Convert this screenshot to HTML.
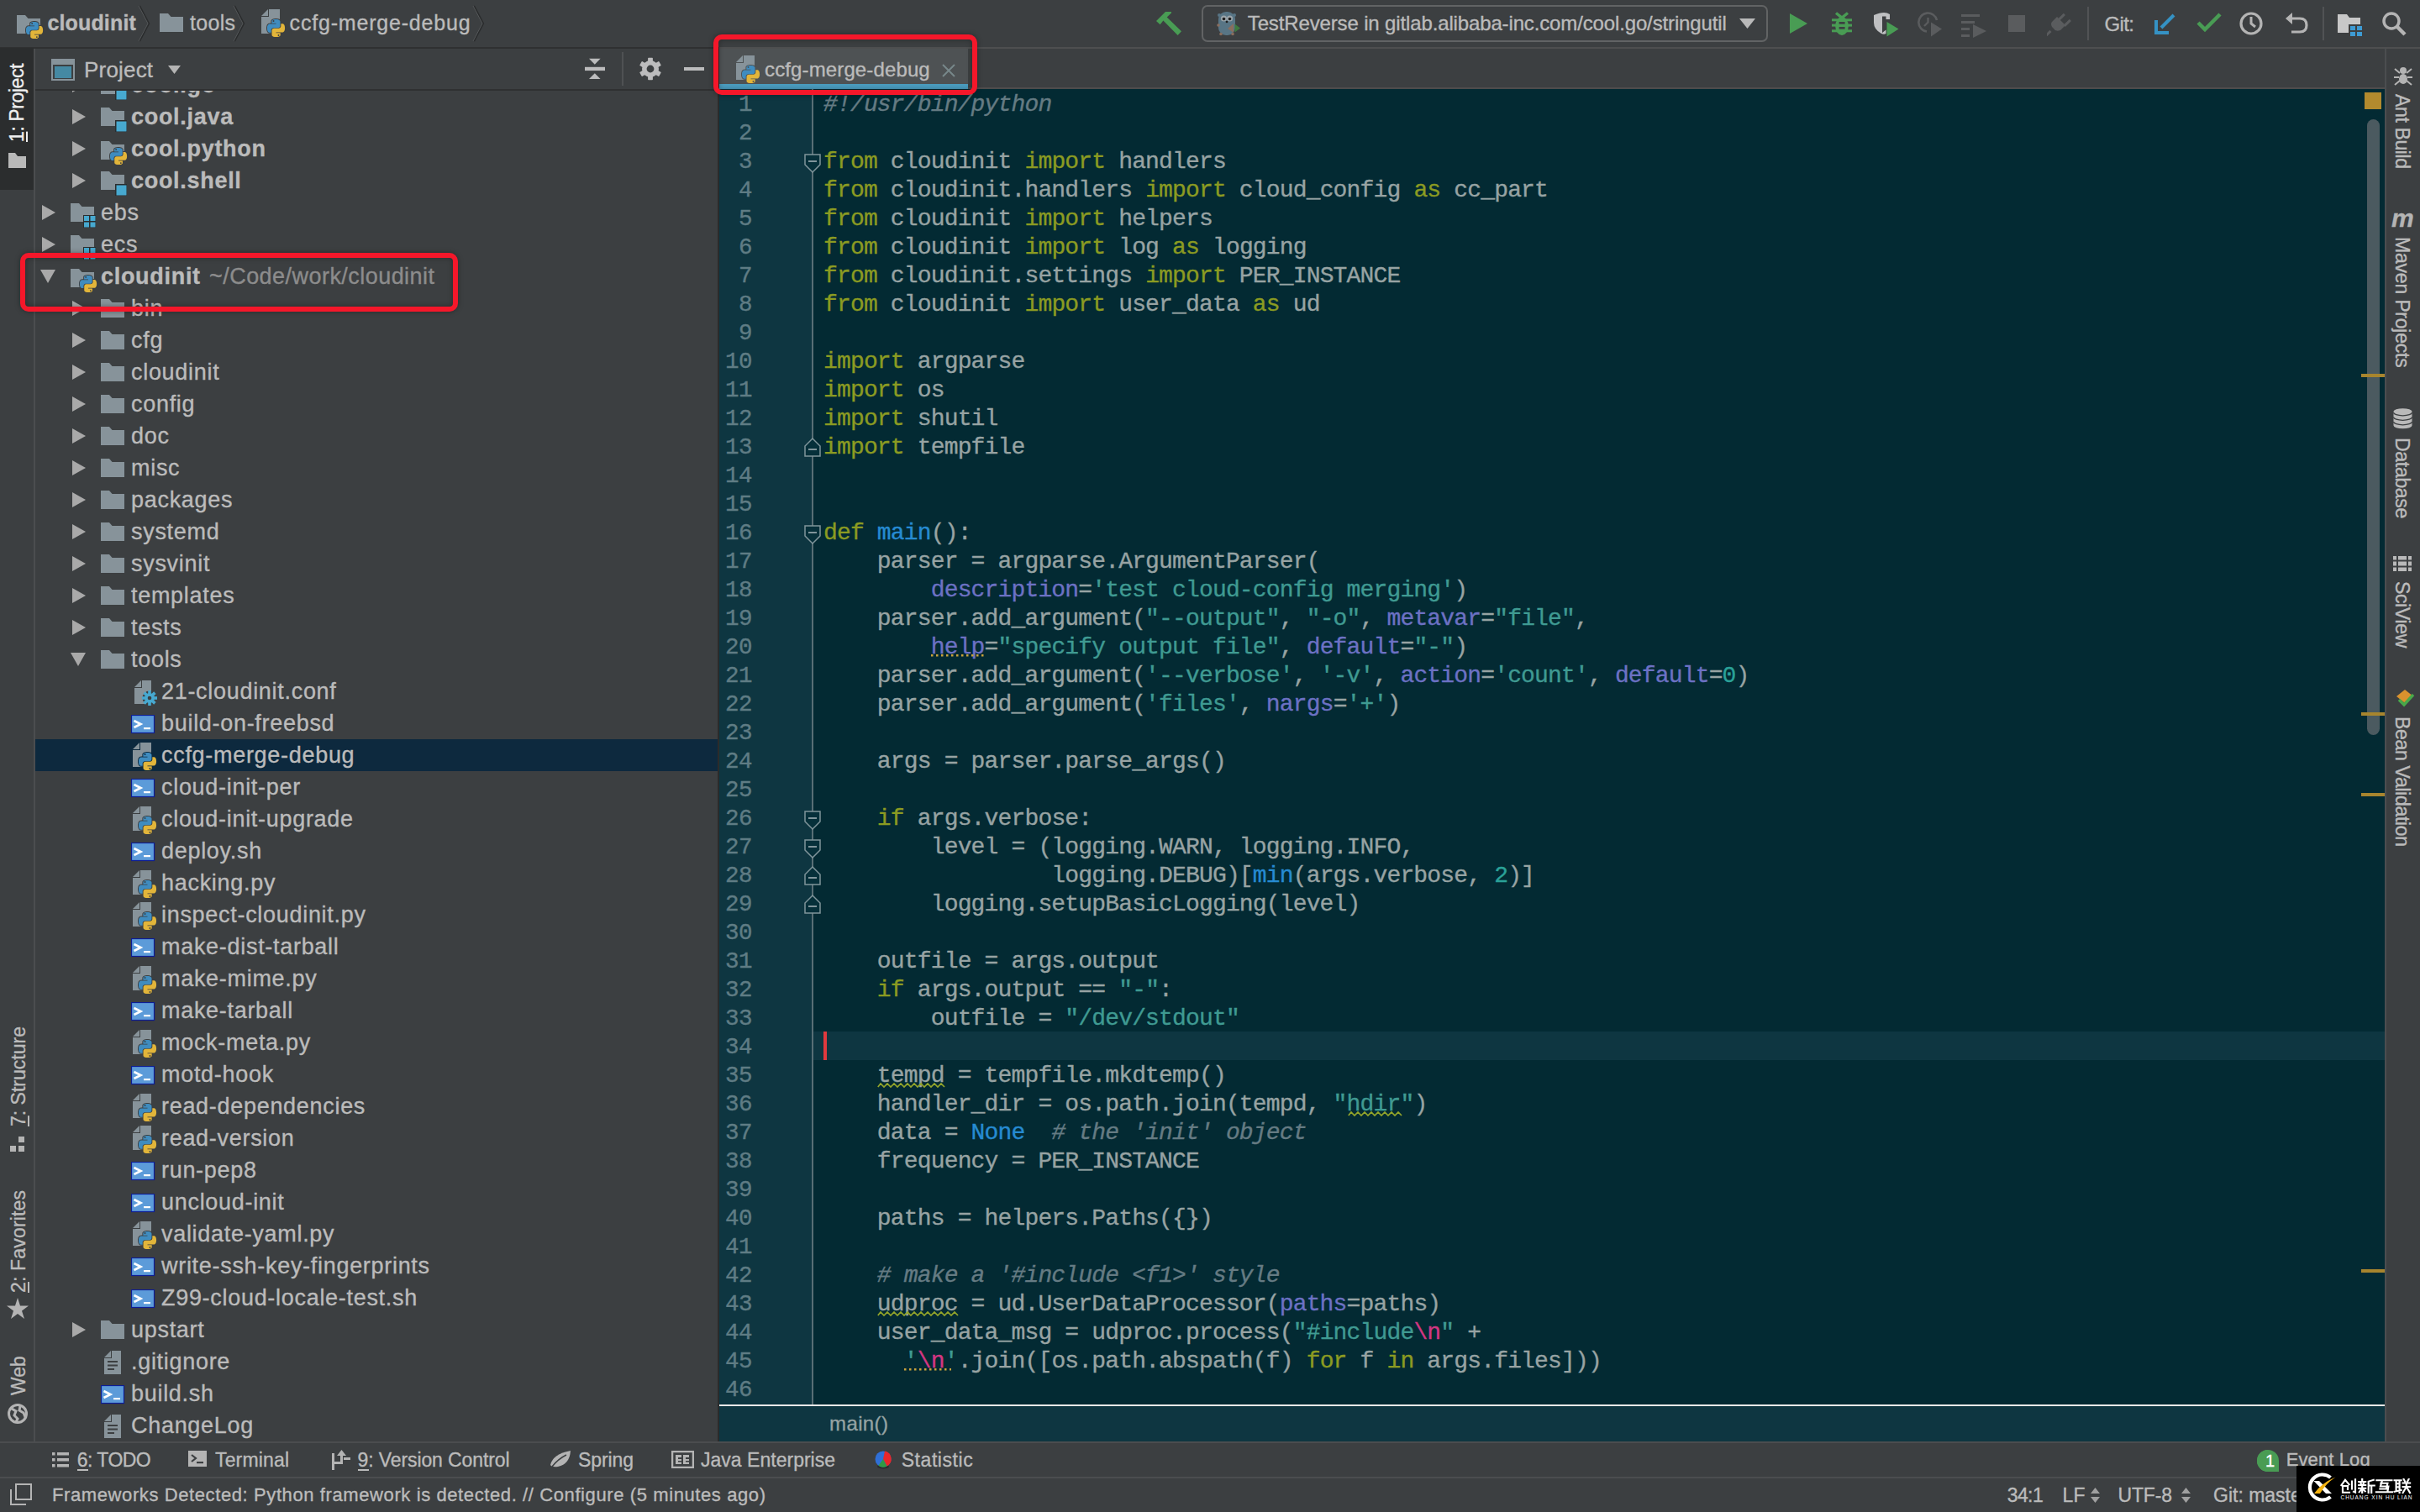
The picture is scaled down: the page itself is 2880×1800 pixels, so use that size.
<!DOCTYPE html><html><head><meta charset="utf-8"><style>
html,body{margin:0;padding:0;width:2880px;height:1800px;overflow:hidden;background:#3c3f41;}
body>div,body>svg{position:absolute;}
.t{white-space:pre;line-height:1;font-family:"Liberation Sans",sans-serif;-webkit-text-stroke:0.35px currentColor;}
</style></head><body>
<div style="left:0px;top:0px;width:2880px;height:56px;background:#3c3f41;"></div>
<div style="left:0px;top:56px;width:856px;height:2px;background:#2f3031;"></div>
<div style="left:856px;top:56px;width:2024px;height:2px;background:#4e4f50;"></div>
<div style="left:0px;top:58px;width:40px;height:1658px;background:#3c3f41;"></div>
<div style="left:0px;top:57px;width:40px;height:169px;background:#2b2d2e;"></div>
<div style="left:40px;top:58px;width:2px;height:1658px;background:#4b4d4f;"></div>
<div style="left:42px;top:58px;width:812px;height:1658px;background:#3c3f41;"></div>
<div style="left:42px;top:106px;width:812px;height:2px;background:#2f3031;"></div>
<div style="left:854px;top:58px;width:2px;height:1658px;background:#2b2b2b;"></div>
<div style="left:856px;top:58px;width:1982px;height:48px;background:#3c3f41;"></div>
<div style="left:856px;top:104px;width:1982px;height:2px;background:#4e4c4c;"></div>
<div style="left:2838px;top:58px;width:2px;height:1658px;background:#4b4d4f;"></div>
<div style="left:2840px;top:58px;width:40px;height:1658px;background:#3c3f41;"></div>
<div style="left:856px;top:106px;width:110px;height:1566px;background:#0e3641;"></div>
<div style="left:966px;top:106px;width:2px;height:1566px;background:#586e75;"></div>
<div style="left:968px;top:106px;width:1870px;height:1566px;background:#032a33;"></div>
<div style="left:968px;top:1228px;width:1870px;height:34px;background:#0e3641;"></div>
<div style="left:980px;top:1228px;width:4px;height:34px;background:#e0393e;"></div>
<div style="left:856px;top:1672px;width:1982px;height:2px;background:#e8e8e8;"></div>
<div style="left:856px;top:1674px;width:1982px;height:42px;background:#0e3641;"></div>
<div style="left:0px;top:1716px;width:2880px;height:2px;background:#4b4d4f;"></div>
<div style="left:0px;top:1718px;width:2880px;height:40px;background:#3c3f41;"></div>
<div style="left:0px;top:1758px;width:2880px;height:2px;background:#4b4d4f;"></div>
<div style="left:0px;top:1760px;width:2880px;height:40px;background:#3c3f41;"></div>
<div class="t" style="left:879.0px;top:110.93px;font-size:27.5px;color:#5f7c84;font-weight:normal;font-style:normal;font-family:'Liberation Mono', monospace;letter-spacing:-0.5px">1</div>
<div class="t" style="left:980px;top:110.55px;font-size:28px;color:#97a3a3;font-weight:normal;font-style:normal;font-family:'Liberation Mono', monospace;letter-spacing:-0.840px"><span style="color:#657b83;font-style:italic">#!/usr/bin/python</span></div>
<div class="t" style="left:879.0px;top:144.93px;font-size:27.5px;color:#5f7c84;font-weight:normal;font-style:normal;font-family:'Liberation Mono', monospace;letter-spacing:-0.5px">2</div>
<div class="t" style="left:879.0px;top:178.93px;font-size:27.5px;color:#5f7c84;font-weight:normal;font-style:normal;font-family:'Liberation Mono', monospace;letter-spacing:-0.5px">3</div>
<div class="t" style="left:980px;top:178.55px;font-size:28px;color:#97a3a3;font-weight:normal;font-style:normal;font-family:'Liberation Mono', monospace;letter-spacing:-0.840px"><span style="color:#8b9b22">from</span><span style="color:#97a3a3"> cloudinit </span><span style="color:#8b9b22">import</span><span style="color:#97a3a3"> handlers</span></div>
<div class="t" style="left:879.0px;top:212.93px;font-size:27.5px;color:#5f7c84;font-weight:normal;font-style:normal;font-family:'Liberation Mono', monospace;letter-spacing:-0.5px">4</div>
<div class="t" style="left:980px;top:212.55px;font-size:28px;color:#97a3a3;font-weight:normal;font-style:normal;font-family:'Liberation Mono', monospace;letter-spacing:-0.840px"><span style="color:#8b9b22">from</span><span style="color:#97a3a3"> cloudinit.handlers </span><span style="color:#8b9b22">import</span><span style="color:#97a3a3"> cloud_config </span><span style="color:#8b9b22">as</span><span style="color:#97a3a3"> cc_part</span></div>
<div class="t" style="left:879.0px;top:246.93px;font-size:27.5px;color:#5f7c84;font-weight:normal;font-style:normal;font-family:'Liberation Mono', monospace;letter-spacing:-0.5px">5</div>
<div class="t" style="left:980px;top:246.55px;font-size:28px;color:#97a3a3;font-weight:normal;font-style:normal;font-family:'Liberation Mono', monospace;letter-spacing:-0.840px"><span style="color:#8b9b22">from</span><span style="color:#97a3a3"> cloudinit </span><span style="color:#8b9b22">import</span><span style="color:#97a3a3"> helpers</span></div>
<div class="t" style="left:879.0px;top:280.93px;font-size:27.5px;color:#5f7c84;font-weight:normal;font-style:normal;font-family:'Liberation Mono', monospace;letter-spacing:-0.5px">6</div>
<div class="t" style="left:980px;top:280.55px;font-size:28px;color:#97a3a3;font-weight:normal;font-style:normal;font-family:'Liberation Mono', monospace;letter-spacing:-0.840px"><span style="color:#8b9b22">from</span><span style="color:#97a3a3"> cloudinit </span><span style="color:#8b9b22">import</span><span style="color:#97a3a3"> log </span><span style="color:#8b9b22">as</span><span style="color:#97a3a3"> logging</span></div>
<div class="t" style="left:879.0px;top:314.93px;font-size:27.5px;color:#5f7c84;font-weight:normal;font-style:normal;font-family:'Liberation Mono', monospace;letter-spacing:-0.5px">7</div>
<div class="t" style="left:980px;top:314.55px;font-size:28px;color:#97a3a3;font-weight:normal;font-style:normal;font-family:'Liberation Mono', monospace;letter-spacing:-0.840px"><span style="color:#8b9b22">from</span><span style="color:#97a3a3"> cloudinit.settings </span><span style="color:#8b9b22">import</span><span style="color:#97a3a3"> PER_INSTANCE</span></div>
<div class="t" style="left:879.0px;top:348.93px;font-size:27.5px;color:#5f7c84;font-weight:normal;font-style:normal;font-family:'Liberation Mono', monospace;letter-spacing:-0.5px">8</div>
<div class="t" style="left:980px;top:348.55px;font-size:28px;color:#97a3a3;font-weight:normal;font-style:normal;font-family:'Liberation Mono', monospace;letter-spacing:-0.840px"><span style="color:#8b9b22">from</span><span style="color:#97a3a3"> cloudinit </span><span style="color:#8b9b22">import</span><span style="color:#97a3a3"> user_data </span><span style="color:#8b9b22">as</span><span style="color:#97a3a3"> ud</span></div>
<div class="t" style="left:879.0px;top:382.93px;font-size:27.5px;color:#5f7c84;font-weight:normal;font-style:normal;font-family:'Liberation Mono', monospace;letter-spacing:-0.5px">9</div>
<div class="t" style="left:863.0px;top:416.93px;font-size:27.5px;color:#5f7c84;font-weight:normal;font-style:normal;font-family:'Liberation Mono', monospace;letter-spacing:-0.5px">10</div>
<div class="t" style="left:980px;top:416.55px;font-size:28px;color:#97a3a3;font-weight:normal;font-style:normal;font-family:'Liberation Mono', monospace;letter-spacing:-0.840px"><span style="color:#8b9b22">import</span><span style="color:#97a3a3"> argparse</span></div>
<div class="t" style="left:863.0px;top:450.93px;font-size:27.5px;color:#5f7c84;font-weight:normal;font-style:normal;font-family:'Liberation Mono', monospace;letter-spacing:-0.5px">11</div>
<div class="t" style="left:980px;top:450.55px;font-size:28px;color:#97a3a3;font-weight:normal;font-style:normal;font-family:'Liberation Mono', monospace;letter-spacing:-0.840px"><span style="color:#8b9b22">import</span><span style="color:#97a3a3"> os</span></div>
<div class="t" style="left:863.0px;top:484.93px;font-size:27.5px;color:#5f7c84;font-weight:normal;font-style:normal;font-family:'Liberation Mono', monospace;letter-spacing:-0.5px">12</div>
<div class="t" style="left:980px;top:484.55px;font-size:28px;color:#97a3a3;font-weight:normal;font-style:normal;font-family:'Liberation Mono', monospace;letter-spacing:-0.840px"><span style="color:#8b9b22">import</span><span style="color:#97a3a3"> shutil</span></div>
<div class="t" style="left:863.0px;top:518.93px;font-size:27.5px;color:#5f7c84;font-weight:normal;font-style:normal;font-family:'Liberation Mono', monospace;letter-spacing:-0.5px">13</div>
<div class="t" style="left:980px;top:518.55px;font-size:28px;color:#97a3a3;font-weight:normal;font-style:normal;font-family:'Liberation Mono', monospace;letter-spacing:-0.840px"><span style="color:#8b9b22">import</span><span style="color:#97a3a3"> tempfile</span></div>
<div class="t" style="left:863.0px;top:552.93px;font-size:27.5px;color:#5f7c84;font-weight:normal;font-style:normal;font-family:'Liberation Mono', monospace;letter-spacing:-0.5px">14</div>
<div class="t" style="left:863.0px;top:586.93px;font-size:27.5px;color:#5f7c84;font-weight:normal;font-style:normal;font-family:'Liberation Mono', monospace;letter-spacing:-0.5px">15</div>
<div class="t" style="left:863.0px;top:620.93px;font-size:27.5px;color:#5f7c84;font-weight:normal;font-style:normal;font-family:'Liberation Mono', monospace;letter-spacing:-0.5px">16</div>
<div class="t" style="left:980px;top:620.55px;font-size:28px;color:#97a3a3;font-weight:normal;font-style:normal;font-family:'Liberation Mono', monospace;letter-spacing:-0.840px"><span style="color:#8b9b22">def</span><span style="color:#97a3a3"> </span><span style="color:#268bd2">main</span><span style="color:#97a3a3">():</span></div>
<div class="t" style="left:863.0px;top:654.93px;font-size:27.5px;color:#5f7c84;font-weight:normal;font-style:normal;font-family:'Liberation Mono', monospace;letter-spacing:-0.5px">17</div>
<div class="t" style="left:980px;top:654.55px;font-size:28px;color:#97a3a3;font-weight:normal;font-style:normal;font-family:'Liberation Mono', monospace;letter-spacing:-0.840px"><span style="color:#97a3a3">    parser = argparse.ArgumentParser(</span></div>
<div class="t" style="left:863.0px;top:688.93px;font-size:27.5px;color:#5f7c84;font-weight:normal;font-style:normal;font-family:'Liberation Mono', monospace;letter-spacing:-0.5px">18</div>
<div class="t" style="left:980px;top:688.55px;font-size:28px;color:#97a3a3;font-weight:normal;font-style:normal;font-family:'Liberation Mono', monospace;letter-spacing:-0.840px"><span style="color:#97a3a3">        </span><span style="color:#6c71c4">description</span><span style="color:#97a3a3">=</span><span style="color:#3f9a92">'test cloud-config merging'</span><span style="color:#97a3a3">)</span></div>
<div class="t" style="left:863.0px;top:722.93px;font-size:27.5px;color:#5f7c84;font-weight:normal;font-style:normal;font-family:'Liberation Mono', monospace;letter-spacing:-0.5px">19</div>
<div class="t" style="left:980px;top:722.55px;font-size:28px;color:#97a3a3;font-weight:normal;font-style:normal;font-family:'Liberation Mono', monospace;letter-spacing:-0.840px"><span style="color:#97a3a3">    parser.add_argument(</span><span style="color:#3f9a92">"--output"</span><span style="color:#97a3a3">, </span><span style="color:#3f9a92">"-o"</span><span style="color:#97a3a3">, </span><span style="color:#6c71c4">metavar</span><span style="color:#97a3a3">=</span><span style="color:#3f9a92">"file"</span><span style="color:#97a3a3">,</span></div>
<div class="t" style="left:863.0px;top:756.93px;font-size:27.5px;color:#5f7c84;font-weight:normal;font-style:normal;font-family:'Liberation Mono', monospace;letter-spacing:-0.5px">20</div>
<div class="t" style="left:980px;top:756.55px;font-size:28px;color:#97a3a3;font-weight:normal;font-style:normal;font-family:'Liberation Mono', monospace;letter-spacing:-0.840px"><span style="color:#97a3a3">        </span><span style="color:#6c71c4">help</span><span style="color:#97a3a3">=</span><span style="color:#3f9a92">"specify output file"</span><span style="color:#97a3a3">, </span><span style="color:#6c71c4">default</span><span style="color:#97a3a3">=</span><span style="color:#3f9a92">"-"</span><span style="color:#97a3a3">)</span></div>
<div class="t" style="left:863.0px;top:790.93px;font-size:27.5px;color:#5f7c84;font-weight:normal;font-style:normal;font-family:'Liberation Mono', monospace;letter-spacing:-0.5px">21</div>
<div class="t" style="left:980px;top:790.55px;font-size:28px;color:#97a3a3;font-weight:normal;font-style:normal;font-family:'Liberation Mono', monospace;letter-spacing:-0.840px"><span style="color:#97a3a3">    parser.add_argument(</span><span style="color:#3f9a92">'--verbose'</span><span style="color:#97a3a3">, </span><span style="color:#3f9a92">'-v'</span><span style="color:#97a3a3">, </span><span style="color:#6c71c4">action</span><span style="color:#97a3a3">=</span><span style="color:#3f9a92">'count'</span><span style="color:#97a3a3">, </span><span style="color:#6c71c4">default</span><span style="color:#97a3a3">=</span><span style="color:#2aa198">0</span><span style="color:#97a3a3">)</span></div>
<div class="t" style="left:863.0px;top:824.93px;font-size:27.5px;color:#5f7c84;font-weight:normal;font-style:normal;font-family:'Liberation Mono', monospace;letter-spacing:-0.5px">22</div>
<div class="t" style="left:980px;top:824.55px;font-size:28px;color:#97a3a3;font-weight:normal;font-style:normal;font-family:'Liberation Mono', monospace;letter-spacing:-0.840px"><span style="color:#97a3a3">    parser.add_argument(</span><span style="color:#3f9a92">'files'</span><span style="color:#97a3a3">, </span><span style="color:#6c71c4">nargs</span><span style="color:#97a3a3">=</span><span style="color:#3f9a92">'+'</span><span style="color:#97a3a3">)</span></div>
<div class="t" style="left:863.0px;top:858.93px;font-size:27.5px;color:#5f7c84;font-weight:normal;font-style:normal;font-family:'Liberation Mono', monospace;letter-spacing:-0.5px">23</div>
<div class="t" style="left:863.0px;top:892.93px;font-size:27.5px;color:#5f7c84;font-weight:normal;font-style:normal;font-family:'Liberation Mono', monospace;letter-spacing:-0.5px">24</div>
<div class="t" style="left:980px;top:892.55px;font-size:28px;color:#97a3a3;font-weight:normal;font-style:normal;font-family:'Liberation Mono', monospace;letter-spacing:-0.840px"><span style="color:#97a3a3">    args = parser.parse_args()</span></div>
<div class="t" style="left:863.0px;top:926.93px;font-size:27.5px;color:#5f7c84;font-weight:normal;font-style:normal;font-family:'Liberation Mono', monospace;letter-spacing:-0.5px">25</div>
<div class="t" style="left:863.0px;top:960.93px;font-size:27.5px;color:#5f7c84;font-weight:normal;font-style:normal;font-family:'Liberation Mono', monospace;letter-spacing:-0.5px">26</div>
<div class="t" style="left:980px;top:960.55px;font-size:28px;color:#97a3a3;font-weight:normal;font-style:normal;font-family:'Liberation Mono', monospace;letter-spacing:-0.840px"><span style="color:#97a3a3">    </span><span style="color:#8b9b22">if</span><span style="color:#97a3a3"> args.verbose:</span></div>
<div class="t" style="left:863.0px;top:994.93px;font-size:27.5px;color:#5f7c84;font-weight:normal;font-style:normal;font-family:'Liberation Mono', monospace;letter-spacing:-0.5px">27</div>
<div class="t" style="left:980px;top:994.55px;font-size:28px;color:#97a3a3;font-weight:normal;font-style:normal;font-family:'Liberation Mono', monospace;letter-spacing:-0.840px"><span style="color:#97a3a3">        level = (logging.WARN, logging.INFO,</span></div>
<div class="t" style="left:863.0px;top:1028.93px;font-size:27.5px;color:#5f7c84;font-weight:normal;font-style:normal;font-family:'Liberation Mono', monospace;letter-spacing:-0.5px">28</div>
<div class="t" style="left:980px;top:1028.55px;font-size:28px;color:#97a3a3;font-weight:normal;font-style:normal;font-family:'Liberation Mono', monospace;letter-spacing:-0.840px"><span style="color:#97a3a3">                 logging.DEBUG)[</span><span style="color:#268bd2">min</span><span style="color:#97a3a3">(args.verbose, </span><span style="color:#2aa198">2</span><span style="color:#97a3a3">)]</span></div>
<div class="t" style="left:863.0px;top:1062.93px;font-size:27.5px;color:#5f7c84;font-weight:normal;font-style:normal;font-family:'Liberation Mono', monospace;letter-spacing:-0.5px">29</div>
<div class="t" style="left:980px;top:1062.55px;font-size:28px;color:#97a3a3;font-weight:normal;font-style:normal;font-family:'Liberation Mono', monospace;letter-spacing:-0.840px"><span style="color:#97a3a3">        logging.setupBasicLogging(level)</span></div>
<div class="t" style="left:863.0px;top:1096.93px;font-size:27.5px;color:#5f7c84;font-weight:normal;font-style:normal;font-family:'Liberation Mono', monospace;letter-spacing:-0.5px">30</div>
<div class="t" style="left:863.0px;top:1130.93px;font-size:27.5px;color:#5f7c84;font-weight:normal;font-style:normal;font-family:'Liberation Mono', monospace;letter-spacing:-0.5px">31</div>
<div class="t" style="left:980px;top:1130.55px;font-size:28px;color:#97a3a3;font-weight:normal;font-style:normal;font-family:'Liberation Mono', monospace;letter-spacing:-0.840px"><span style="color:#97a3a3">    outfile = args.output</span></div>
<div class="t" style="left:863.0px;top:1164.93px;font-size:27.5px;color:#5f7c84;font-weight:normal;font-style:normal;font-family:'Liberation Mono', monospace;letter-spacing:-0.5px">32</div>
<div class="t" style="left:980px;top:1164.55px;font-size:28px;color:#97a3a3;font-weight:normal;font-style:normal;font-family:'Liberation Mono', monospace;letter-spacing:-0.840px"><span style="color:#97a3a3">    </span><span style="color:#8b9b22">if</span><span style="color:#97a3a3"> args.output == </span><span style="color:#3f9a92">"-"</span><span style="color:#97a3a3">:</span></div>
<div class="t" style="left:863.0px;top:1198.93px;font-size:27.5px;color:#5f7c84;font-weight:normal;font-style:normal;font-family:'Liberation Mono', monospace;letter-spacing:-0.5px">33</div>
<div class="t" style="left:980px;top:1198.55px;font-size:28px;color:#97a3a3;font-weight:normal;font-style:normal;font-family:'Liberation Mono', monospace;letter-spacing:-0.840px"><span style="color:#97a3a3">        outfile = </span><span style="color:#3f9a92">"/dev/stdout"</span></div>
<div class="t" style="left:863.0px;top:1232.93px;font-size:27.5px;color:#5f7c84;font-weight:normal;font-style:normal;font-family:'Liberation Mono', monospace;letter-spacing:-0.5px">34</div>
<div class="t" style="left:863.0px;top:1266.93px;font-size:27.5px;color:#5f7c84;font-weight:normal;font-style:normal;font-family:'Liberation Mono', monospace;letter-spacing:-0.5px">35</div>
<div class="t" style="left:980px;top:1266.55px;font-size:28px;color:#97a3a3;font-weight:normal;font-style:normal;font-family:'Liberation Mono', monospace;letter-spacing:-0.840px"><span style="color:#97a3a3">    tempd = tempfile.mkdtemp()</span></div>
<div class="t" style="left:863.0px;top:1300.93px;font-size:27.5px;color:#5f7c84;font-weight:normal;font-style:normal;font-family:'Liberation Mono', monospace;letter-spacing:-0.5px">36</div>
<div class="t" style="left:980px;top:1300.55px;font-size:28px;color:#97a3a3;font-weight:normal;font-style:normal;font-family:'Liberation Mono', monospace;letter-spacing:-0.840px"><span style="color:#97a3a3">    handler_dir = os.path.join(tempd, </span><span style="color:#3f9a92">"hdir"</span><span style="color:#97a3a3">)</span></div>
<div class="t" style="left:863.0px;top:1334.93px;font-size:27.5px;color:#5f7c84;font-weight:normal;font-style:normal;font-family:'Liberation Mono', monospace;letter-spacing:-0.5px">37</div>
<div class="t" style="left:980px;top:1334.55px;font-size:28px;color:#97a3a3;font-weight:normal;font-style:normal;font-family:'Liberation Mono', monospace;letter-spacing:-0.840px"><span style="color:#97a3a3">    data = </span><span style="color:#268bd2">None</span><span style="color:#97a3a3">  </span><span style="color:#657b83;font-style:italic"># the 'init' object</span></div>
<div class="t" style="left:863.0px;top:1368.93px;font-size:27.5px;color:#5f7c84;font-weight:normal;font-style:normal;font-family:'Liberation Mono', monospace;letter-spacing:-0.5px">38</div>
<div class="t" style="left:980px;top:1368.55px;font-size:28px;color:#97a3a3;font-weight:normal;font-style:normal;font-family:'Liberation Mono', monospace;letter-spacing:-0.840px"><span style="color:#97a3a3">    frequency = PER_INSTANCE</span></div>
<div class="t" style="left:863.0px;top:1402.93px;font-size:27.5px;color:#5f7c84;font-weight:normal;font-style:normal;font-family:'Liberation Mono', monospace;letter-spacing:-0.5px">39</div>
<div class="t" style="left:863.0px;top:1436.93px;font-size:27.5px;color:#5f7c84;font-weight:normal;font-style:normal;font-family:'Liberation Mono', monospace;letter-spacing:-0.5px">40</div>
<div class="t" style="left:980px;top:1436.55px;font-size:28px;color:#97a3a3;font-weight:normal;font-style:normal;font-family:'Liberation Mono', monospace;letter-spacing:-0.840px"><span style="color:#97a3a3">    paths = helpers.Paths({})</span></div>
<div class="t" style="left:863.0px;top:1470.93px;font-size:27.5px;color:#5f7c84;font-weight:normal;font-style:normal;font-family:'Liberation Mono', monospace;letter-spacing:-0.5px">41</div>
<div class="t" style="left:863.0px;top:1504.93px;font-size:27.5px;color:#5f7c84;font-weight:normal;font-style:normal;font-family:'Liberation Mono', monospace;letter-spacing:-0.5px">42</div>
<div class="t" style="left:980px;top:1504.55px;font-size:28px;color:#97a3a3;font-weight:normal;font-style:normal;font-family:'Liberation Mono', monospace;letter-spacing:-0.840px"><span style="color:#97a3a3">    </span><span style="color:#657b83;font-style:italic"># make a '#include &lt;f1&gt;' style</span></div>
<div class="t" style="left:863.0px;top:1538.93px;font-size:27.5px;color:#5f7c84;font-weight:normal;font-style:normal;font-family:'Liberation Mono', monospace;letter-spacing:-0.5px">43</div>
<div class="t" style="left:980px;top:1538.55px;font-size:28px;color:#97a3a3;font-weight:normal;font-style:normal;font-family:'Liberation Mono', monospace;letter-spacing:-0.840px"><span style="color:#97a3a3">    udproc = ud.UserDataProcessor(</span><span style="color:#6c71c4">paths</span><span style="color:#97a3a3">=paths)</span></div>
<div class="t" style="left:863.0px;top:1572.93px;font-size:27.5px;color:#5f7c84;font-weight:normal;font-style:normal;font-family:'Liberation Mono', monospace;letter-spacing:-0.5px">44</div>
<div class="t" style="left:980px;top:1572.55px;font-size:28px;color:#97a3a3;font-weight:normal;font-style:normal;font-family:'Liberation Mono', monospace;letter-spacing:-0.840px"><span style="color:#97a3a3">    user_data_msg = udproc.process(</span><span style="color:#3f9a92">"#include</span><span style="color:#d33682">\n</span><span style="color:#3f9a92">"</span><span style="color:#97a3a3"> +</span></div>
<div class="t" style="left:863.0px;top:1606.93px;font-size:27.5px;color:#5f7c84;font-weight:normal;font-style:normal;font-family:'Liberation Mono', monospace;letter-spacing:-0.5px">45</div>
<div class="t" style="left:980px;top:1606.55px;font-size:28px;color:#97a3a3;font-weight:normal;font-style:normal;font-family:'Liberation Mono', monospace;letter-spacing:-0.840px"><span style="color:#97a3a3">      </span><span style="color:#3f9a92">'</span><span style="color:#d33682">\n</span><span style="color:#3f9a92">'</span><span style="color:#97a3a3">.join([os.path.abspath(f) </span><span style="color:#8b9b22">for</span><span style="color:#97a3a3"> f </span><span style="color:#8b9b22">in</span><span style="color:#97a3a3"> args.files]))</span></div>
<div class="t" style="left:863.0px;top:1640.93px;font-size:27.5px;color:#5f7c84;font-weight:normal;font-style:normal;font-family:'Liberation Mono', monospace;letter-spacing:-0.5px">46</div>
<div style="left:42px;top:108px;width:812px;height:1608px;overflow:hidden">
<svg style="position:absolute;left:44px;top:-16px" width="17" height="19" viewBox="0 0 17 19"><path d="M0 0 L16 9 L0 18 Z" fill="#a9a9a9"/></svg>
<svg style="position:absolute;left:78px;top:-18px" width="29" height="23" viewBox="0 0 29 23"><path d="M0 0 H10 L13.5 4 H28 V22 H0 Z" fill="#87939a"/></svg>
<svg style="position:absolute;left:95px;top:-3px" width="14" height="14" viewBox="0 0 14 14"><rect x="0" y="0" width="14" height="14" fill="#2b2d2e"/><rect x="1.5" y="1.5" width="12" height="12" fill="#47a9d0"/></svg>
<div class="t" style="position:absolute;left:114px;top:-19.86px;font-size:27px;color:#bbbbbb;font-weight:bold;font-style:normal;font-family:'Liberation Sans', sans-serif;letter-spacing:0.7px">cool.go</div>
<svg style="position:absolute;left:44px;top:22px" width="17" height="19" viewBox="0 0 17 19"><path d="M0 0 L16 9 L0 18 Z" fill="#a9a9a9"/></svg>
<svg style="position:absolute;left:78px;top:20px" width="29" height="23" viewBox="0 0 29 23"><path d="M0 0 H10 L13.5 4 H28 V22 H0 Z" fill="#87939a"/></svg>
<svg style="position:absolute;left:95px;top:35px" width="14" height="14" viewBox="0 0 14 14"><rect x="0" y="0" width="14" height="14" fill="#2b2d2e"/><rect x="1.5" y="1.5" width="12" height="12" fill="#47a9d0"/></svg>
<div class="t" style="position:absolute;left:114px;top:18.14px;font-size:27px;color:#bbbbbb;font-weight:bold;font-style:normal;font-family:'Liberation Sans', sans-serif;letter-spacing:0.7px">cool.java</div>
<svg style="position:absolute;left:44px;top:60px" width="17" height="19" viewBox="0 0 17 19"><path d="M0 0 L16 9 L0 18 Z" fill="#a9a9a9"/></svg>
<svg style="position:absolute;left:78px;top:60px" width="29" height="23" viewBox="0 0 29 23"><path d="M0 0 H10 L13.5 4 H28 V22 H0 Z" fill="#87939a"/></svg>
<svg style="position:absolute;left:88px;top:67px" width="22" height="22" viewBox="0 0 22 22"><g transform="translate(0.88 0.88) scale(0.2024)"><path d="M49.5 0 C24 0 25.6 11 25.6 11 L25.6 22.5 L50 22.5 L50 26 L16 26 C16 26 0 24 0 50 C0 76 14 75 14 75 L22.5 75 L22.5 63 C22.5 63 21.8 49 36 49 L60 49 C60 49 73.5 49.2 73.5 36 L73.5 13.5 C73.5 13.5 75.5 0 49.5 0 Z" fill="#3c3f41" stroke="#3c3f41" stroke-width="9" stroke-linejoin="round"/><path d="M49.5 0 C24 0 25.6 11 25.6 11 L25.6 22.5 L50 22.5 L50 26 L16 26 C16 26 0 24 0 50 C0 76 14 75 14 75 L22.5 75 L22.5 63 C22.5 63 21.8 49 36 49 L60 49 C60 49 73.5 49.2 73.5 36 L73.5 13.5 C73.5 13.5 75.5 0 49.5 0 Z" transform="rotate(180 50 50)" fill="#3c3f41" stroke="#3c3f41" stroke-width="9" stroke-linejoin="round"/><path d="M49.5 0 C24 0 25.6 11 25.6 11 L25.6 22.5 L50 22.5 L50 26 L16 26 C16 26 0 24 0 50 C0 76 14 75 14 75 L22.5 75 L22.5 63 C22.5 63 21.8 49 36 49 L60 49 C60 49 73.5 49.2 73.5 36 L73.5 13.5 C73.5 13.5 75.5 0 49.5 0 Z" fill="#3f8cbf"/><path d="M49.5 0 C24 0 25.6 11 25.6 11 L25.6 22.5 L50 22.5 L50 26 L16 26 C16 26 0 24 0 50 C0 76 14 75 14 75 L22.5 75 L22.5 63 C22.5 63 21.8 49 36 49 L60 49 C60 49 73.5 49.2 73.5 36 L73.5 13.5 C73.5 13.5 75.5 0 49.5 0 Z" transform="rotate(180 50 50)" fill="#e2b53a"/><circle cx="36" cy="10" r="4.5" fill="#3c3f41"/><circle cx="64" cy="90" r="4.5" fill="#3c3f41"/></g></svg>
<div class="t" style="position:absolute;left:114px;top:56.14px;font-size:27px;color:#bbbbbb;font-weight:bold;font-style:normal;font-family:'Liberation Sans', sans-serif;letter-spacing:0.7px">cool.python</div>
<svg style="position:absolute;left:44px;top:98px" width="17" height="19" viewBox="0 0 17 19"><path d="M0 0 L16 9 L0 18 Z" fill="#a9a9a9"/></svg>
<svg style="position:absolute;left:78px;top:96px" width="29" height="23" viewBox="0 0 29 23"><path d="M0 0 H10 L13.5 4 H28 V22 H0 Z" fill="#87939a"/></svg>
<svg style="position:absolute;left:95px;top:111px" width="14" height="14" viewBox="0 0 14 14"><rect x="0" y="0" width="14" height="14" fill="#2b2d2e"/><rect x="1.5" y="1.5" width="12" height="12" fill="#47a9d0"/></svg>
<div class="t" style="position:absolute;left:114px;top:94.14px;font-size:27px;color:#bbbbbb;font-weight:bold;font-style:normal;font-family:'Liberation Sans', sans-serif;letter-spacing:0.7px">cool.shell</div>
<svg style="position:absolute;left:8px;top:136px" width="17" height="19" viewBox="0 0 17 19"><path d="M0 0 L16 9 L0 18 Z" fill="#a9a9a9"/></svg>
<svg style="position:absolute;left:42px;top:134px" width="29" height="23" viewBox="0 0 29 23"><path d="M0 0 H10 L13.5 4 H28 V22 H0 Z" fill="#87939a"/></svg>
<svg style="position:absolute;left:57px;top:148px" width="15" height="15" viewBox="0 0 15 15"><rect x="0" y="0" width="15" height="15" fill="#2b2d2e"/><rect x="1" y="1" width="6" height="6" fill="#47a9d0"/><rect x="8.5" y="1" width="6" height="6" fill="#47a9d0"/><rect x="1" y="8.5" width="6" height="6" fill="#47a9d0"/><rect x="8.5" y="8.5" width="6" height="6" fill="#47a9d0"/></svg>
<div class="t" style="position:absolute;left:78px;top:132.14px;font-size:27px;color:#bbbbbb;font-weight:normal;font-style:normal;font-family:'Liberation Sans', sans-serif;letter-spacing:0.7px">ebs</div>
<svg style="position:absolute;left:8px;top:174px" width="17" height="19" viewBox="0 0 17 19"><path d="M0 0 L16 9 L0 18 Z" fill="#a9a9a9"/></svg>
<svg style="position:absolute;left:42px;top:172px" width="29" height="23" viewBox="0 0 29 23"><path d="M0 0 H10 L13.5 4 H28 V22 H0 Z" fill="#87939a"/></svg>
<svg style="position:absolute;left:57px;top:186px" width="15" height="15" viewBox="0 0 15 15"><rect x="0" y="0" width="15" height="15" fill="#2b2d2e"/><rect x="1" y="1" width="6" height="6" fill="#47a9d0"/><rect x="8.5" y="1" width="6" height="6" fill="#47a9d0"/><rect x="1" y="8.5" width="6" height="6" fill="#47a9d0"/><rect x="8.5" y="8.5" width="6" height="6" fill="#47a9d0"/></svg>
<div class="t" style="position:absolute;left:78px;top:170.14px;font-size:27px;color:#bbbbbb;font-weight:normal;font-style:normal;font-family:'Liberation Sans', sans-serif;letter-spacing:0.7px">ecs</div>
<svg style="position:absolute;left:6px;top:213px" width="19" height="17" viewBox="0 0 19 17"><path d="M0 0 L18 0 L9 16 Z" fill="#a9a9a9"/></svg>
<svg style="position:absolute;left:42px;top:212px" width="29" height="23" viewBox="0 0 29 23"><path d="M0 0 H10 L13.5 4 H28 V22 H0 Z" fill="#87939a"/></svg>
<svg style="position:absolute;left:52px;top:219px" width="22" height="22" viewBox="0 0 22 22"><g transform="translate(0.88 0.88) scale(0.2024)"><path d="M49.5 0 C24 0 25.6 11 25.6 11 L25.6 22.5 L50 22.5 L50 26 L16 26 C16 26 0 24 0 50 C0 76 14 75 14 75 L22.5 75 L22.5 63 C22.5 63 21.8 49 36 49 L60 49 C60 49 73.5 49.2 73.5 36 L73.5 13.5 C73.5 13.5 75.5 0 49.5 0 Z" fill="#3c3f41" stroke="#3c3f41" stroke-width="9" stroke-linejoin="round"/><path d="M49.5 0 C24 0 25.6 11 25.6 11 L25.6 22.5 L50 22.5 L50 26 L16 26 C16 26 0 24 0 50 C0 76 14 75 14 75 L22.5 75 L22.5 63 C22.5 63 21.8 49 36 49 L60 49 C60 49 73.5 49.2 73.5 36 L73.5 13.5 C73.5 13.5 75.5 0 49.5 0 Z" transform="rotate(180 50 50)" fill="#3c3f41" stroke="#3c3f41" stroke-width="9" stroke-linejoin="round"/><path d="M49.5 0 C24 0 25.6 11 25.6 11 L25.6 22.5 L50 22.5 L50 26 L16 26 C16 26 0 24 0 50 C0 76 14 75 14 75 L22.5 75 L22.5 63 C22.5 63 21.8 49 36 49 L60 49 C60 49 73.5 49.2 73.5 36 L73.5 13.5 C73.5 13.5 75.5 0 49.5 0 Z" fill="#3f8cbf"/><path d="M49.5 0 C24 0 25.6 11 25.6 11 L25.6 22.5 L50 22.5 L50 26 L16 26 C16 26 0 24 0 50 C0 76 14 75 14 75 L22.5 75 L22.5 63 C22.5 63 21.8 49 36 49 L60 49 C60 49 73.5 49.2 73.5 36 L73.5 13.5 C73.5 13.5 75.5 0 49.5 0 Z" transform="rotate(180 50 50)" fill="#e2b53a"/><circle cx="36" cy="10" r="4.5" fill="#3c3f41"/><circle cx="64" cy="90" r="4.5" fill="#3c3f41"/></g></svg>
<div class="t" style="position:absolute;left:78px;top:208.14px;font-size:27px;color:#bbbbbb;font-weight:bold;font-style:normal;font-family:'Liberation Sans', sans-serif;letter-spacing:0.7px">cloudinit</div>
<div class="t" style="position:absolute;left:207.0px;top:208.14px;font-size:27px;color:#8c8c8c;font-weight:normal;font-style:normal;font-family:'Liberation Sans', sans-serif;letter-spacing:0.456px;">~/Code/work/cloudinit</div>
<svg style="position:absolute;left:44px;top:250px" width="17" height="19" viewBox="0 0 17 19"><path d="M0 0 L16 9 L0 18 Z" fill="#a9a9a9"/></svg>
<svg style="position:absolute;left:78px;top:248px" width="29" height="23" viewBox="0 0 29 23"><path d="M0 0 H10 L13.5 4 H28 V22 H0 Z" fill="#87939a"/></svg>
<div class="t" style="position:absolute;left:114px;top:246.14px;font-size:27px;color:#bbbbbb;font-weight:normal;font-style:normal;font-family:'Liberation Sans', sans-serif;letter-spacing:0.7px">bin</div>
<svg style="position:absolute;left:44px;top:288px" width="17" height="19" viewBox="0 0 17 19"><path d="M0 0 L16 9 L0 18 Z" fill="#a9a9a9"/></svg>
<svg style="position:absolute;left:78px;top:286px" width="29" height="23" viewBox="0 0 29 23"><path d="M0 0 H10 L13.5 4 H28 V22 H0 Z" fill="#87939a"/></svg>
<div class="t" style="position:absolute;left:114px;top:284.14px;font-size:27px;color:#bbbbbb;font-weight:normal;font-style:normal;font-family:'Liberation Sans', sans-serif;letter-spacing:0.7px">cfg</div>
<svg style="position:absolute;left:44px;top:326px" width="17" height="19" viewBox="0 0 17 19"><path d="M0 0 L16 9 L0 18 Z" fill="#a9a9a9"/></svg>
<svg style="position:absolute;left:78px;top:324px" width="29" height="23" viewBox="0 0 29 23"><path d="M0 0 H10 L13.5 4 H28 V22 H0 Z" fill="#87939a"/></svg>
<div class="t" style="position:absolute;left:114px;top:322.14px;font-size:27px;color:#bbbbbb;font-weight:normal;font-style:normal;font-family:'Liberation Sans', sans-serif;letter-spacing:0.7px">cloudinit</div>
<svg style="position:absolute;left:44px;top:364px" width="17" height="19" viewBox="0 0 17 19"><path d="M0 0 L16 9 L0 18 Z" fill="#a9a9a9"/></svg>
<svg style="position:absolute;left:78px;top:362px" width="29" height="23" viewBox="0 0 29 23"><path d="M0 0 H10 L13.5 4 H28 V22 H0 Z" fill="#87939a"/></svg>
<div class="t" style="position:absolute;left:114px;top:360.14px;font-size:27px;color:#bbbbbb;font-weight:normal;font-style:normal;font-family:'Liberation Sans', sans-serif;letter-spacing:0.7px">config</div>
<svg style="position:absolute;left:44px;top:402px" width="17" height="19" viewBox="0 0 17 19"><path d="M0 0 L16 9 L0 18 Z" fill="#a9a9a9"/></svg>
<svg style="position:absolute;left:78px;top:400px" width="29" height="23" viewBox="0 0 29 23"><path d="M0 0 H10 L13.5 4 H28 V22 H0 Z" fill="#87939a"/></svg>
<div class="t" style="position:absolute;left:114px;top:398.14px;font-size:27px;color:#bbbbbb;font-weight:normal;font-style:normal;font-family:'Liberation Sans', sans-serif;letter-spacing:0.7px">doc</div>
<svg style="position:absolute;left:44px;top:440px" width="17" height="19" viewBox="0 0 17 19"><path d="M0 0 L16 9 L0 18 Z" fill="#a9a9a9"/></svg>
<svg style="position:absolute;left:78px;top:438px" width="29" height="23" viewBox="0 0 29 23"><path d="M0 0 H10 L13.5 4 H28 V22 H0 Z" fill="#87939a"/></svg>
<div class="t" style="position:absolute;left:114px;top:436.14px;font-size:27px;color:#bbbbbb;font-weight:normal;font-style:normal;font-family:'Liberation Sans', sans-serif;letter-spacing:0.7px">misc</div>
<svg style="position:absolute;left:44px;top:478px" width="17" height="19" viewBox="0 0 17 19"><path d="M0 0 L16 9 L0 18 Z" fill="#a9a9a9"/></svg>
<svg style="position:absolute;left:78px;top:476px" width="29" height="23" viewBox="0 0 29 23"><path d="M0 0 H10 L13.5 4 H28 V22 H0 Z" fill="#87939a"/></svg>
<div class="t" style="position:absolute;left:114px;top:474.14px;font-size:27px;color:#bbbbbb;font-weight:normal;font-style:normal;font-family:'Liberation Sans', sans-serif;letter-spacing:0.7px">packages</div>
<svg style="position:absolute;left:44px;top:516px" width="17" height="19" viewBox="0 0 17 19"><path d="M0 0 L16 9 L0 18 Z" fill="#a9a9a9"/></svg>
<svg style="position:absolute;left:78px;top:514px" width="29" height="23" viewBox="0 0 29 23"><path d="M0 0 H10 L13.5 4 H28 V22 H0 Z" fill="#87939a"/></svg>
<div class="t" style="position:absolute;left:114px;top:512.14px;font-size:27px;color:#bbbbbb;font-weight:normal;font-style:normal;font-family:'Liberation Sans', sans-serif;letter-spacing:0.7px">systemd</div>
<svg style="position:absolute;left:44px;top:554px" width="17" height="19" viewBox="0 0 17 19"><path d="M0 0 L16 9 L0 18 Z" fill="#a9a9a9"/></svg>
<svg style="position:absolute;left:78px;top:552px" width="29" height="23" viewBox="0 0 29 23"><path d="M0 0 H10 L13.5 4 H28 V22 H0 Z" fill="#87939a"/></svg>
<div class="t" style="position:absolute;left:114px;top:550.14px;font-size:27px;color:#bbbbbb;font-weight:normal;font-style:normal;font-family:'Liberation Sans', sans-serif;letter-spacing:0.7px">sysvinit</div>
<svg style="position:absolute;left:44px;top:592px" width="17" height="19" viewBox="0 0 17 19"><path d="M0 0 L16 9 L0 18 Z" fill="#a9a9a9"/></svg>
<svg style="position:absolute;left:78px;top:590px" width="29" height="23" viewBox="0 0 29 23"><path d="M0 0 H10 L13.5 4 H28 V22 H0 Z" fill="#87939a"/></svg>
<div class="t" style="position:absolute;left:114px;top:588.14px;font-size:27px;color:#bbbbbb;font-weight:normal;font-style:normal;font-family:'Liberation Sans', sans-serif;letter-spacing:0.7px">templates</div>
<svg style="position:absolute;left:44px;top:630px" width="17" height="19" viewBox="0 0 17 19"><path d="M0 0 L16 9 L0 18 Z" fill="#a9a9a9"/></svg>
<svg style="position:absolute;left:78px;top:628px" width="29" height="23" viewBox="0 0 29 23"><path d="M0 0 H10 L13.5 4 H28 V22 H0 Z" fill="#87939a"/></svg>
<div class="t" style="position:absolute;left:114px;top:626.14px;font-size:27px;color:#bbbbbb;font-weight:normal;font-style:normal;font-family:'Liberation Sans', sans-serif;letter-spacing:0.7px">tests</div>
<svg style="position:absolute;left:42px;top:669px" width="19" height="17" viewBox="0 0 19 17"><path d="M0 0 L18 0 L9 16 Z" fill="#a9a9a9"/></svg>
<svg style="position:absolute;left:78px;top:666px" width="29" height="23" viewBox="0 0 29 23"><path d="M0 0 H10 L13.5 4 H28 V22 H0 Z" fill="#87939a"/></svg>
<div class="t" style="position:absolute;left:114px;top:664.14px;font-size:27px;color:#bbbbbb;font-weight:normal;font-style:normal;font-family:'Liberation Sans', sans-serif;letter-spacing:0.7px">tools</div>
<svg style="position:absolute;left:118px;top:702px" width="21" height="29" viewBox="0 0 21 29"><path d="M0 8 L8 0 V8 Z" fill="#87939a"/><path d="M9 0 H20 V28 H0 V9 H9 Z" fill="#87939a"/></svg>
<svg style="position:absolute;left:126px;top:713px" width="20" height="20" viewBox="0 0 20 20"><g transform="translate(10 10)"><circle r="8.5" fill="#3c3f41"/><rect x="-1.8" y="-9" width="3.6" height="4" transform="rotate(0)" fill="#47a9d0"/><rect x="-1.8" y="-9" width="3.6" height="4" transform="rotate(45)" fill="#47a9d0"/><rect x="-1.8" y="-9" width="3.6" height="4" transform="rotate(90)" fill="#47a9d0"/><rect x="-1.8" y="-9" width="3.6" height="4" transform="rotate(135)" fill="#47a9d0"/><rect x="-1.8" y="-9" width="3.6" height="4" transform="rotate(180)" fill="#47a9d0"/><rect x="-1.8" y="-9" width="3.6" height="4" transform="rotate(225)" fill="#47a9d0"/><rect x="-1.8" y="-9" width="3.6" height="4" transform="rotate(270)" fill="#47a9d0"/><rect x="-1.8" y="-9" width="3.6" height="4" transform="rotate(315)" fill="#47a9d0"/><circle r="6" fill="#47a9d0"/><circle r="2.3" fill="#3c3f41"/></g></svg>
<div class="t" style="position:absolute;left:150px;top:702.14px;font-size:27px;color:#bbbbbb;font-weight:normal;font-style:normal;font-family:'Liberation Sans', sans-serif;letter-spacing:0.7px">21-cloudinit.conf</div>
<svg style="position:absolute;left:114px;top:743px" width="29" height="23" viewBox="0 0 29 23"><rect x="0.5" y="0.5" width="27" height="21" fill="#5c9bd9" stroke="#0c1d96" stroke-width="1.2"/><path d="M3.5 7 L11.5 11 L3.5 15" fill="none" stroke="#fff" stroke-width="2.6"/><rect x="15" y="15" width="8" height="2.2" fill="#fff"/></svg>
<div class="t" style="position:absolute;left:150px;top:740.14px;font-size:27px;color:#bbbbbb;font-weight:normal;font-style:normal;font-family:'Liberation Sans', sans-serif;letter-spacing:0.7px">build-on-freebsd</div>
<div style="position:absolute;left:0px;top:772px;width:812px;height:38px;background:#0d293e;"></div>
<svg style="position:absolute;left:116px;top:776px" width="23" height="30" viewBox="0 0 23 30"><path d="M0 8 L8 0 V8 Z" fill="#87939a"/><path d="M9 0 H22 V29 H0 V9 H9 Z" fill="#87939a"/></svg>
<svg style="position:absolute;left:122px;top:787px" width="23" height="23" viewBox="0 0 23 23"><g transform="translate(0.92 0.92) scale(0.2116)"><path d="M49.5 0 C24 0 25.6 11 25.6 11 L25.6 22.5 L50 22.5 L50 26 L16 26 C16 26 0 24 0 50 C0 76 14 75 14 75 L22.5 75 L22.5 63 C22.5 63 21.8 49 36 49 L60 49 C60 49 73.5 49.2 73.5 36 L73.5 13.5 C73.5 13.5 75.5 0 49.5 0 Z" fill="#0d293e" stroke="#0d293e" stroke-width="9" stroke-linejoin="round"/><path d="M49.5 0 C24 0 25.6 11 25.6 11 L25.6 22.5 L50 22.5 L50 26 L16 26 C16 26 0 24 0 50 C0 76 14 75 14 75 L22.5 75 L22.5 63 C22.5 63 21.8 49 36 49 L60 49 C60 49 73.5 49.2 73.5 36 L73.5 13.5 C73.5 13.5 75.5 0 49.5 0 Z" transform="rotate(180 50 50)" fill="#0d293e" stroke="#0d293e" stroke-width="9" stroke-linejoin="round"/><path d="M49.5 0 C24 0 25.6 11 25.6 11 L25.6 22.5 L50 22.5 L50 26 L16 26 C16 26 0 24 0 50 C0 76 14 75 14 75 L22.5 75 L22.5 63 C22.5 63 21.8 49 36 49 L60 49 C60 49 73.5 49.2 73.5 36 L73.5 13.5 C73.5 13.5 75.5 0 49.5 0 Z" fill="#3f8cbf"/><path d="M49.5 0 C24 0 25.6 11 25.6 11 L25.6 22.5 L50 22.5 L50 26 L16 26 C16 26 0 24 0 50 C0 76 14 75 14 75 L22.5 75 L22.5 63 C22.5 63 21.8 49 36 49 L60 49 C60 49 73.5 49.2 73.5 36 L73.5 13.5 C73.5 13.5 75.5 0 49.5 0 Z" transform="rotate(180 50 50)" fill="#e2b53a"/><circle cx="36" cy="10" r="4.5" fill="#0d293e"/><circle cx="64" cy="90" r="4.5" fill="#0d293e"/></g></svg>
<div class="t" style="position:absolute;left:150px;top:778.14px;font-size:27px;color:#bbbbbb;font-weight:normal;font-style:normal;font-family:'Liberation Sans', sans-serif;letter-spacing:0.7px">ccfg-merge-debug</div>
<svg style="position:absolute;left:114px;top:819px" width="29" height="23" viewBox="0 0 29 23"><rect x="0.5" y="0.5" width="27" height="21" fill="#5c9bd9" stroke="#0c1d96" stroke-width="1.2"/><path d="M3.5 7 L11.5 11 L3.5 15" fill="none" stroke="#fff" stroke-width="2.6"/><rect x="15" y="15" width="8" height="2.2" fill="#fff"/></svg>
<div class="t" style="position:absolute;left:150px;top:816.14px;font-size:27px;color:#bbbbbb;font-weight:normal;font-style:normal;font-family:'Liberation Sans', sans-serif;letter-spacing:0.7px">cloud-init-per</div>
<svg style="position:absolute;left:116px;top:852px" width="23" height="30" viewBox="0 0 23 30"><path d="M0 8 L8 0 V8 Z" fill="#87939a"/><path d="M9 0 H22 V29 H0 V9 H9 Z" fill="#87939a"/></svg>
<svg style="position:absolute;left:122px;top:863px" width="23" height="23" viewBox="0 0 23 23"><g transform="translate(0.92 0.92) scale(0.2116)"><path d="M49.5 0 C24 0 25.6 11 25.6 11 L25.6 22.5 L50 22.5 L50 26 L16 26 C16 26 0 24 0 50 C0 76 14 75 14 75 L22.5 75 L22.5 63 C22.5 63 21.8 49 36 49 L60 49 C60 49 73.5 49.2 73.5 36 L73.5 13.5 C73.5 13.5 75.5 0 49.5 0 Z" fill="#3c3f41" stroke="#3c3f41" stroke-width="9" stroke-linejoin="round"/><path d="M49.5 0 C24 0 25.6 11 25.6 11 L25.6 22.5 L50 22.5 L50 26 L16 26 C16 26 0 24 0 50 C0 76 14 75 14 75 L22.5 75 L22.5 63 C22.5 63 21.8 49 36 49 L60 49 C60 49 73.5 49.2 73.5 36 L73.5 13.5 C73.5 13.5 75.5 0 49.5 0 Z" transform="rotate(180 50 50)" fill="#3c3f41" stroke="#3c3f41" stroke-width="9" stroke-linejoin="round"/><path d="M49.5 0 C24 0 25.6 11 25.6 11 L25.6 22.5 L50 22.5 L50 26 L16 26 C16 26 0 24 0 50 C0 76 14 75 14 75 L22.5 75 L22.5 63 C22.5 63 21.8 49 36 49 L60 49 C60 49 73.5 49.2 73.5 36 L73.5 13.5 C73.5 13.5 75.5 0 49.5 0 Z" fill="#3f8cbf"/><path d="M49.5 0 C24 0 25.6 11 25.6 11 L25.6 22.5 L50 22.5 L50 26 L16 26 C16 26 0 24 0 50 C0 76 14 75 14 75 L22.5 75 L22.5 63 C22.5 63 21.8 49 36 49 L60 49 C60 49 73.5 49.2 73.5 36 L73.5 13.5 C73.5 13.5 75.5 0 49.5 0 Z" transform="rotate(180 50 50)" fill="#e2b53a"/><circle cx="36" cy="10" r="4.5" fill="#3c3f41"/><circle cx="64" cy="90" r="4.5" fill="#3c3f41"/></g></svg>
<div class="t" style="position:absolute;left:150px;top:854.14px;font-size:27px;color:#bbbbbb;font-weight:normal;font-style:normal;font-family:'Liberation Sans', sans-serif;letter-spacing:0.7px">cloud-init-upgrade</div>
<svg style="position:absolute;left:114px;top:895px" width="29" height="23" viewBox="0 0 29 23"><rect x="0.5" y="0.5" width="27" height="21" fill="#5c9bd9" stroke="#0c1d96" stroke-width="1.2"/><path d="M3.5 7 L11.5 11 L3.5 15" fill="none" stroke="#fff" stroke-width="2.6"/><rect x="15" y="15" width="8" height="2.2" fill="#fff"/></svg>
<div class="t" style="position:absolute;left:150px;top:892.14px;font-size:27px;color:#bbbbbb;font-weight:normal;font-style:normal;font-family:'Liberation Sans', sans-serif;letter-spacing:0.7px">deploy.sh</div>
<svg style="position:absolute;left:116px;top:928px" width="23" height="30" viewBox="0 0 23 30"><path d="M0 8 L8 0 V8 Z" fill="#87939a"/><path d="M9 0 H22 V29 H0 V9 H9 Z" fill="#87939a"/></svg>
<svg style="position:absolute;left:122px;top:939px" width="23" height="23" viewBox="0 0 23 23"><g transform="translate(0.92 0.92) scale(0.2116)"><path d="M49.5 0 C24 0 25.6 11 25.6 11 L25.6 22.5 L50 22.5 L50 26 L16 26 C16 26 0 24 0 50 C0 76 14 75 14 75 L22.5 75 L22.5 63 C22.5 63 21.8 49 36 49 L60 49 C60 49 73.5 49.2 73.5 36 L73.5 13.5 C73.5 13.5 75.5 0 49.5 0 Z" fill="#3c3f41" stroke="#3c3f41" stroke-width="9" stroke-linejoin="round"/><path d="M49.5 0 C24 0 25.6 11 25.6 11 L25.6 22.5 L50 22.5 L50 26 L16 26 C16 26 0 24 0 50 C0 76 14 75 14 75 L22.5 75 L22.5 63 C22.5 63 21.8 49 36 49 L60 49 C60 49 73.5 49.2 73.5 36 L73.5 13.5 C73.5 13.5 75.5 0 49.5 0 Z" transform="rotate(180 50 50)" fill="#3c3f41" stroke="#3c3f41" stroke-width="9" stroke-linejoin="round"/><path d="M49.5 0 C24 0 25.6 11 25.6 11 L25.6 22.5 L50 22.5 L50 26 L16 26 C16 26 0 24 0 50 C0 76 14 75 14 75 L22.5 75 L22.5 63 C22.5 63 21.8 49 36 49 L60 49 C60 49 73.5 49.2 73.5 36 L73.5 13.5 C73.5 13.5 75.5 0 49.5 0 Z" fill="#3f8cbf"/><path d="M49.5 0 C24 0 25.6 11 25.6 11 L25.6 22.5 L50 22.5 L50 26 L16 26 C16 26 0 24 0 50 C0 76 14 75 14 75 L22.5 75 L22.5 63 C22.5 63 21.8 49 36 49 L60 49 C60 49 73.5 49.2 73.5 36 L73.5 13.5 C73.5 13.5 75.5 0 49.5 0 Z" transform="rotate(180 50 50)" fill="#e2b53a"/><circle cx="36" cy="10" r="4.5" fill="#3c3f41"/><circle cx="64" cy="90" r="4.5" fill="#3c3f41"/></g></svg>
<div class="t" style="position:absolute;left:150px;top:930.14px;font-size:27px;color:#bbbbbb;font-weight:normal;font-style:normal;font-family:'Liberation Sans', sans-serif;letter-spacing:0.7px">hacking.py</div>
<svg style="position:absolute;left:116px;top:966px" width="23" height="30" viewBox="0 0 23 30"><path d="M0 8 L8 0 V8 Z" fill="#87939a"/><path d="M9 0 H22 V29 H0 V9 H9 Z" fill="#87939a"/></svg>
<svg style="position:absolute;left:122px;top:977px" width="23" height="23" viewBox="0 0 23 23"><g transform="translate(0.92 0.92) scale(0.2116)"><path d="M49.5 0 C24 0 25.6 11 25.6 11 L25.6 22.5 L50 22.5 L50 26 L16 26 C16 26 0 24 0 50 C0 76 14 75 14 75 L22.5 75 L22.5 63 C22.5 63 21.8 49 36 49 L60 49 C60 49 73.5 49.2 73.5 36 L73.5 13.5 C73.5 13.5 75.5 0 49.5 0 Z" fill="#3c3f41" stroke="#3c3f41" stroke-width="9" stroke-linejoin="round"/><path d="M49.5 0 C24 0 25.6 11 25.6 11 L25.6 22.5 L50 22.5 L50 26 L16 26 C16 26 0 24 0 50 C0 76 14 75 14 75 L22.5 75 L22.5 63 C22.5 63 21.8 49 36 49 L60 49 C60 49 73.5 49.2 73.5 36 L73.5 13.5 C73.5 13.5 75.5 0 49.5 0 Z" transform="rotate(180 50 50)" fill="#3c3f41" stroke="#3c3f41" stroke-width="9" stroke-linejoin="round"/><path d="M49.5 0 C24 0 25.6 11 25.6 11 L25.6 22.5 L50 22.5 L50 26 L16 26 C16 26 0 24 0 50 C0 76 14 75 14 75 L22.5 75 L22.5 63 C22.5 63 21.8 49 36 49 L60 49 C60 49 73.5 49.2 73.5 36 L73.5 13.5 C73.5 13.5 75.5 0 49.5 0 Z" fill="#3f8cbf"/><path d="M49.5 0 C24 0 25.6 11 25.6 11 L25.6 22.5 L50 22.5 L50 26 L16 26 C16 26 0 24 0 50 C0 76 14 75 14 75 L22.5 75 L22.5 63 C22.5 63 21.8 49 36 49 L60 49 C60 49 73.5 49.2 73.5 36 L73.5 13.5 C73.5 13.5 75.5 0 49.5 0 Z" transform="rotate(180 50 50)" fill="#e2b53a"/><circle cx="36" cy="10" r="4.5" fill="#3c3f41"/><circle cx="64" cy="90" r="4.5" fill="#3c3f41"/></g></svg>
<div class="t" style="position:absolute;left:150px;top:968.14px;font-size:27px;color:#bbbbbb;font-weight:normal;font-style:normal;font-family:'Liberation Sans', sans-serif;letter-spacing:0.7px">inspect-cloudinit.py</div>
<svg style="position:absolute;left:114px;top:1009px" width="29" height="23" viewBox="0 0 29 23"><rect x="0.5" y="0.5" width="27" height="21" fill="#5c9bd9" stroke="#0c1d96" stroke-width="1.2"/><path d="M3.5 7 L11.5 11 L3.5 15" fill="none" stroke="#fff" stroke-width="2.6"/><rect x="15" y="15" width="8" height="2.2" fill="#fff"/></svg>
<div class="t" style="position:absolute;left:150px;top:1006.14px;font-size:27px;color:#bbbbbb;font-weight:normal;font-style:normal;font-family:'Liberation Sans', sans-serif;letter-spacing:0.7px">make-dist-tarball</div>
<svg style="position:absolute;left:116px;top:1042px" width="23" height="30" viewBox="0 0 23 30"><path d="M0 8 L8 0 V8 Z" fill="#87939a"/><path d="M9 0 H22 V29 H0 V9 H9 Z" fill="#87939a"/></svg>
<svg style="position:absolute;left:122px;top:1053px" width="23" height="23" viewBox="0 0 23 23"><g transform="translate(0.92 0.92) scale(0.2116)"><path d="M49.5 0 C24 0 25.6 11 25.6 11 L25.6 22.5 L50 22.5 L50 26 L16 26 C16 26 0 24 0 50 C0 76 14 75 14 75 L22.5 75 L22.5 63 C22.5 63 21.8 49 36 49 L60 49 C60 49 73.5 49.2 73.5 36 L73.5 13.5 C73.5 13.5 75.5 0 49.5 0 Z" fill="#3c3f41" stroke="#3c3f41" stroke-width="9" stroke-linejoin="round"/><path d="M49.5 0 C24 0 25.6 11 25.6 11 L25.6 22.5 L50 22.5 L50 26 L16 26 C16 26 0 24 0 50 C0 76 14 75 14 75 L22.5 75 L22.5 63 C22.5 63 21.8 49 36 49 L60 49 C60 49 73.5 49.2 73.5 36 L73.5 13.5 C73.5 13.5 75.5 0 49.5 0 Z" transform="rotate(180 50 50)" fill="#3c3f41" stroke="#3c3f41" stroke-width="9" stroke-linejoin="round"/><path d="M49.5 0 C24 0 25.6 11 25.6 11 L25.6 22.5 L50 22.5 L50 26 L16 26 C16 26 0 24 0 50 C0 76 14 75 14 75 L22.5 75 L22.5 63 C22.5 63 21.8 49 36 49 L60 49 C60 49 73.5 49.2 73.5 36 L73.5 13.5 C73.5 13.5 75.5 0 49.5 0 Z" fill="#3f8cbf"/><path d="M49.5 0 C24 0 25.6 11 25.6 11 L25.6 22.5 L50 22.5 L50 26 L16 26 C16 26 0 24 0 50 C0 76 14 75 14 75 L22.5 75 L22.5 63 C22.5 63 21.8 49 36 49 L60 49 C60 49 73.5 49.2 73.5 36 L73.5 13.5 C73.5 13.5 75.5 0 49.5 0 Z" transform="rotate(180 50 50)" fill="#e2b53a"/><circle cx="36" cy="10" r="4.5" fill="#3c3f41"/><circle cx="64" cy="90" r="4.5" fill="#3c3f41"/></g></svg>
<div class="t" style="position:absolute;left:150px;top:1044.14px;font-size:27px;color:#bbbbbb;font-weight:normal;font-style:normal;font-family:'Liberation Sans', sans-serif;letter-spacing:0.7px">make-mime.py</div>
<svg style="position:absolute;left:114px;top:1085px" width="29" height="23" viewBox="0 0 29 23"><rect x="0.5" y="0.5" width="27" height="21" fill="#5c9bd9" stroke="#0c1d96" stroke-width="1.2"/><path d="M3.5 7 L11.5 11 L3.5 15" fill="none" stroke="#fff" stroke-width="2.6"/><rect x="15" y="15" width="8" height="2.2" fill="#fff"/></svg>
<div class="t" style="position:absolute;left:150px;top:1082.14px;font-size:27px;color:#bbbbbb;font-weight:normal;font-style:normal;font-family:'Liberation Sans', sans-serif;letter-spacing:0.7px">make-tarball</div>
<svg style="position:absolute;left:116px;top:1118px" width="23" height="30" viewBox="0 0 23 30"><path d="M0 8 L8 0 V8 Z" fill="#87939a"/><path d="M9 0 H22 V29 H0 V9 H9 Z" fill="#87939a"/></svg>
<svg style="position:absolute;left:122px;top:1129px" width="23" height="23" viewBox="0 0 23 23"><g transform="translate(0.92 0.92) scale(0.2116)"><path d="M49.5 0 C24 0 25.6 11 25.6 11 L25.6 22.5 L50 22.5 L50 26 L16 26 C16 26 0 24 0 50 C0 76 14 75 14 75 L22.5 75 L22.5 63 C22.5 63 21.8 49 36 49 L60 49 C60 49 73.5 49.2 73.5 36 L73.5 13.5 C73.5 13.5 75.5 0 49.5 0 Z" fill="#3c3f41" stroke="#3c3f41" stroke-width="9" stroke-linejoin="round"/><path d="M49.5 0 C24 0 25.6 11 25.6 11 L25.6 22.5 L50 22.5 L50 26 L16 26 C16 26 0 24 0 50 C0 76 14 75 14 75 L22.5 75 L22.5 63 C22.5 63 21.8 49 36 49 L60 49 C60 49 73.5 49.2 73.5 36 L73.5 13.5 C73.5 13.5 75.5 0 49.5 0 Z" transform="rotate(180 50 50)" fill="#3c3f41" stroke="#3c3f41" stroke-width="9" stroke-linejoin="round"/><path d="M49.5 0 C24 0 25.6 11 25.6 11 L25.6 22.5 L50 22.5 L50 26 L16 26 C16 26 0 24 0 50 C0 76 14 75 14 75 L22.5 75 L22.5 63 C22.5 63 21.8 49 36 49 L60 49 C60 49 73.5 49.2 73.5 36 L73.5 13.5 C73.5 13.5 75.5 0 49.5 0 Z" fill="#3f8cbf"/><path d="M49.5 0 C24 0 25.6 11 25.6 11 L25.6 22.5 L50 22.5 L50 26 L16 26 C16 26 0 24 0 50 C0 76 14 75 14 75 L22.5 75 L22.5 63 C22.5 63 21.8 49 36 49 L60 49 C60 49 73.5 49.2 73.5 36 L73.5 13.5 C73.5 13.5 75.5 0 49.5 0 Z" transform="rotate(180 50 50)" fill="#e2b53a"/><circle cx="36" cy="10" r="4.5" fill="#3c3f41"/><circle cx="64" cy="90" r="4.5" fill="#3c3f41"/></g></svg>
<div class="t" style="position:absolute;left:150px;top:1120.14px;font-size:27px;color:#bbbbbb;font-weight:normal;font-style:normal;font-family:'Liberation Sans', sans-serif;letter-spacing:0.7px">mock-meta.py</div>
<svg style="position:absolute;left:114px;top:1161px" width="29" height="23" viewBox="0 0 29 23"><rect x="0.5" y="0.5" width="27" height="21" fill="#5c9bd9" stroke="#0c1d96" stroke-width="1.2"/><path d="M3.5 7 L11.5 11 L3.5 15" fill="none" stroke="#fff" stroke-width="2.6"/><rect x="15" y="15" width="8" height="2.2" fill="#fff"/></svg>
<div class="t" style="position:absolute;left:150px;top:1158.14px;font-size:27px;color:#bbbbbb;font-weight:normal;font-style:normal;font-family:'Liberation Sans', sans-serif;letter-spacing:0.7px">motd-hook</div>
<svg style="position:absolute;left:116px;top:1194px" width="23" height="30" viewBox="0 0 23 30"><path d="M0 8 L8 0 V8 Z" fill="#87939a"/><path d="M9 0 H22 V29 H0 V9 H9 Z" fill="#87939a"/></svg>
<svg style="position:absolute;left:122px;top:1205px" width="23" height="23" viewBox="0 0 23 23"><g transform="translate(0.92 0.92) scale(0.2116)"><path d="M49.5 0 C24 0 25.6 11 25.6 11 L25.6 22.5 L50 22.5 L50 26 L16 26 C16 26 0 24 0 50 C0 76 14 75 14 75 L22.5 75 L22.5 63 C22.5 63 21.8 49 36 49 L60 49 C60 49 73.5 49.2 73.5 36 L73.5 13.5 C73.5 13.5 75.5 0 49.5 0 Z" fill="#3c3f41" stroke="#3c3f41" stroke-width="9" stroke-linejoin="round"/><path d="M49.5 0 C24 0 25.6 11 25.6 11 L25.6 22.5 L50 22.5 L50 26 L16 26 C16 26 0 24 0 50 C0 76 14 75 14 75 L22.5 75 L22.5 63 C22.5 63 21.8 49 36 49 L60 49 C60 49 73.5 49.2 73.5 36 L73.5 13.5 C73.5 13.5 75.5 0 49.5 0 Z" transform="rotate(180 50 50)" fill="#3c3f41" stroke="#3c3f41" stroke-width="9" stroke-linejoin="round"/><path d="M49.5 0 C24 0 25.6 11 25.6 11 L25.6 22.5 L50 22.5 L50 26 L16 26 C16 26 0 24 0 50 C0 76 14 75 14 75 L22.5 75 L22.5 63 C22.5 63 21.8 49 36 49 L60 49 C60 49 73.5 49.2 73.5 36 L73.5 13.5 C73.5 13.5 75.5 0 49.5 0 Z" fill="#3f8cbf"/><path d="M49.5 0 C24 0 25.6 11 25.6 11 L25.6 22.5 L50 22.5 L50 26 L16 26 C16 26 0 24 0 50 C0 76 14 75 14 75 L22.5 75 L22.5 63 C22.5 63 21.8 49 36 49 L60 49 C60 49 73.5 49.2 73.5 36 L73.5 13.5 C73.5 13.5 75.5 0 49.5 0 Z" transform="rotate(180 50 50)" fill="#e2b53a"/><circle cx="36" cy="10" r="4.5" fill="#3c3f41"/><circle cx="64" cy="90" r="4.5" fill="#3c3f41"/></g></svg>
<div class="t" style="position:absolute;left:150px;top:1196.14px;font-size:27px;color:#bbbbbb;font-weight:normal;font-style:normal;font-family:'Liberation Sans', sans-serif;letter-spacing:0.7px">read-dependencies</div>
<svg style="position:absolute;left:116px;top:1232px" width="23" height="30" viewBox="0 0 23 30"><path d="M0 8 L8 0 V8 Z" fill="#87939a"/><path d="M9 0 H22 V29 H0 V9 H9 Z" fill="#87939a"/></svg>
<svg style="position:absolute;left:122px;top:1243px" width="23" height="23" viewBox="0 0 23 23"><g transform="translate(0.92 0.92) scale(0.2116)"><path d="M49.5 0 C24 0 25.6 11 25.6 11 L25.6 22.5 L50 22.5 L50 26 L16 26 C16 26 0 24 0 50 C0 76 14 75 14 75 L22.5 75 L22.5 63 C22.5 63 21.8 49 36 49 L60 49 C60 49 73.5 49.2 73.5 36 L73.5 13.5 C73.5 13.5 75.5 0 49.5 0 Z" fill="#3c3f41" stroke="#3c3f41" stroke-width="9" stroke-linejoin="round"/><path d="M49.5 0 C24 0 25.6 11 25.6 11 L25.6 22.5 L50 22.5 L50 26 L16 26 C16 26 0 24 0 50 C0 76 14 75 14 75 L22.5 75 L22.5 63 C22.5 63 21.8 49 36 49 L60 49 C60 49 73.5 49.2 73.5 36 L73.5 13.5 C73.5 13.5 75.5 0 49.5 0 Z" transform="rotate(180 50 50)" fill="#3c3f41" stroke="#3c3f41" stroke-width="9" stroke-linejoin="round"/><path d="M49.5 0 C24 0 25.6 11 25.6 11 L25.6 22.5 L50 22.5 L50 26 L16 26 C16 26 0 24 0 50 C0 76 14 75 14 75 L22.5 75 L22.5 63 C22.5 63 21.8 49 36 49 L60 49 C60 49 73.5 49.2 73.5 36 L73.5 13.5 C73.5 13.5 75.5 0 49.5 0 Z" fill="#3f8cbf"/><path d="M49.5 0 C24 0 25.6 11 25.6 11 L25.6 22.5 L50 22.5 L50 26 L16 26 C16 26 0 24 0 50 C0 76 14 75 14 75 L22.5 75 L22.5 63 C22.5 63 21.8 49 36 49 L60 49 C60 49 73.5 49.2 73.5 36 L73.5 13.5 C73.5 13.5 75.5 0 49.5 0 Z" transform="rotate(180 50 50)" fill="#e2b53a"/><circle cx="36" cy="10" r="4.5" fill="#3c3f41"/><circle cx="64" cy="90" r="4.5" fill="#3c3f41"/></g></svg>
<div class="t" style="position:absolute;left:150px;top:1234.14px;font-size:27px;color:#bbbbbb;font-weight:normal;font-style:normal;font-family:'Liberation Sans', sans-serif;letter-spacing:0.7px">read-version</div>
<svg style="position:absolute;left:114px;top:1275px" width="29" height="23" viewBox="0 0 29 23"><rect x="0.5" y="0.5" width="27" height="21" fill="#5c9bd9" stroke="#0c1d96" stroke-width="1.2"/><path d="M3.5 7 L11.5 11 L3.5 15" fill="none" stroke="#fff" stroke-width="2.6"/><rect x="15" y="15" width="8" height="2.2" fill="#fff"/></svg>
<div class="t" style="position:absolute;left:150px;top:1272.14px;font-size:27px;color:#bbbbbb;font-weight:normal;font-style:normal;font-family:'Liberation Sans', sans-serif;letter-spacing:0.7px">run-pep8</div>
<svg style="position:absolute;left:114px;top:1313px" width="29" height="23" viewBox="0 0 29 23"><rect x="0.5" y="0.5" width="27" height="21" fill="#5c9bd9" stroke="#0c1d96" stroke-width="1.2"/><path d="M3.5 7 L11.5 11 L3.5 15" fill="none" stroke="#fff" stroke-width="2.6"/><rect x="15" y="15" width="8" height="2.2" fill="#fff"/></svg>
<div class="t" style="position:absolute;left:150px;top:1310.14px;font-size:27px;color:#bbbbbb;font-weight:normal;font-style:normal;font-family:'Liberation Sans', sans-serif;letter-spacing:0.7px">uncloud-init</div>
<svg style="position:absolute;left:116px;top:1346px" width="23" height="30" viewBox="0 0 23 30"><path d="M0 8 L8 0 V8 Z" fill="#87939a"/><path d="M9 0 H22 V29 H0 V9 H9 Z" fill="#87939a"/></svg>
<svg style="position:absolute;left:122px;top:1357px" width="23" height="23" viewBox="0 0 23 23"><g transform="translate(0.92 0.92) scale(0.2116)"><path d="M49.5 0 C24 0 25.6 11 25.6 11 L25.6 22.5 L50 22.5 L50 26 L16 26 C16 26 0 24 0 50 C0 76 14 75 14 75 L22.5 75 L22.5 63 C22.5 63 21.8 49 36 49 L60 49 C60 49 73.5 49.2 73.5 36 L73.5 13.5 C73.5 13.5 75.5 0 49.5 0 Z" fill="#3c3f41" stroke="#3c3f41" stroke-width="9" stroke-linejoin="round"/><path d="M49.5 0 C24 0 25.6 11 25.6 11 L25.6 22.5 L50 22.5 L50 26 L16 26 C16 26 0 24 0 50 C0 76 14 75 14 75 L22.5 75 L22.5 63 C22.5 63 21.8 49 36 49 L60 49 C60 49 73.5 49.2 73.5 36 L73.5 13.5 C73.5 13.5 75.5 0 49.5 0 Z" transform="rotate(180 50 50)" fill="#3c3f41" stroke="#3c3f41" stroke-width="9" stroke-linejoin="round"/><path d="M49.5 0 C24 0 25.6 11 25.6 11 L25.6 22.5 L50 22.5 L50 26 L16 26 C16 26 0 24 0 50 C0 76 14 75 14 75 L22.5 75 L22.5 63 C22.5 63 21.8 49 36 49 L60 49 C60 49 73.5 49.2 73.5 36 L73.5 13.5 C73.5 13.5 75.5 0 49.5 0 Z" fill="#3f8cbf"/><path d="M49.5 0 C24 0 25.6 11 25.6 11 L25.6 22.5 L50 22.5 L50 26 L16 26 C16 26 0 24 0 50 C0 76 14 75 14 75 L22.5 75 L22.5 63 C22.5 63 21.8 49 36 49 L60 49 C60 49 73.5 49.2 73.5 36 L73.5 13.5 C73.5 13.5 75.5 0 49.5 0 Z" transform="rotate(180 50 50)" fill="#e2b53a"/><circle cx="36" cy="10" r="4.5" fill="#3c3f41"/><circle cx="64" cy="90" r="4.5" fill="#3c3f41"/></g></svg>
<div class="t" style="position:absolute;left:150px;top:1348.14px;font-size:27px;color:#bbbbbb;font-weight:normal;font-style:normal;font-family:'Liberation Sans', sans-serif;letter-spacing:0.7px">validate-yaml.py</div>
<svg style="position:absolute;left:114px;top:1389px" width="29" height="23" viewBox="0 0 29 23"><rect x="0.5" y="0.5" width="27" height="21" fill="#5c9bd9" stroke="#0c1d96" stroke-width="1.2"/><path d="M3.5 7 L11.5 11 L3.5 15" fill="none" stroke="#fff" stroke-width="2.6"/><rect x="15" y="15" width="8" height="2.2" fill="#fff"/></svg>
<div class="t" style="position:absolute;left:150px;top:1386.14px;font-size:27px;color:#bbbbbb;font-weight:normal;font-style:normal;font-family:'Liberation Sans', sans-serif;letter-spacing:0.7px">write-ssh-key-fingerprints</div>
<svg style="position:absolute;left:114px;top:1427px" width="29" height="23" viewBox="0 0 29 23"><rect x="0.5" y="0.5" width="27" height="21" fill="#5c9bd9" stroke="#0c1d96" stroke-width="1.2"/><path d="M3.5 7 L11.5 11 L3.5 15" fill="none" stroke="#fff" stroke-width="2.6"/><rect x="15" y="15" width="8" height="2.2" fill="#fff"/></svg>
<div class="t" style="position:absolute;left:150px;top:1424.14px;font-size:27px;color:#bbbbbb;font-weight:normal;font-style:normal;font-family:'Liberation Sans', sans-serif;letter-spacing:0.7px">Z99-cloud-locale-test.sh</div>
<svg style="position:absolute;left:44px;top:1466px" width="17" height="19" viewBox="0 0 17 19"><path d="M0 0 L16 9 L0 18 Z" fill="#a9a9a9"/></svg>
<svg style="position:absolute;left:78px;top:1464px" width="29" height="23" viewBox="0 0 29 23"><path d="M0 0 H10 L13.5 4 H28 V22 H0 Z" fill="#87939a"/></svg>
<div class="t" style="position:absolute;left:114px;top:1462.14px;font-size:27px;color:#bbbbbb;font-weight:normal;font-style:normal;font-family:'Liberation Sans', sans-serif;letter-spacing:0.7px">upstart</div>
<svg style="position:absolute;left:82px;top:1500px" width="21" height="29" viewBox="0 0 21 29"><path d="M0 8 L8 0 V8 Z" fill="#87939a"/><path d="M9 0 H20 V28 H0 V9 H9 Z" fill="#87939a"/></svg>
<svg style="position:absolute;left:86px;top:1512px" width="13" height="14" viewBox="0 0 13 14"><rect x="0" y="0" width="12" height="2" fill="#3c3f41"/><rect x="0" y="4.5" width="12" height="2" fill="#3c3f41"/><rect x="0" y="9" width="8" height="2" fill="#3c3f41"/></svg>
<div class="t" style="position:absolute;left:114px;top:1500.14px;font-size:27px;color:#bbbbbb;font-weight:normal;font-style:normal;font-family:'Liberation Sans', sans-serif;letter-spacing:0.7px">.gitignore</div>
<svg style="position:absolute;left:78px;top:1541px" width="29" height="23" viewBox="0 0 29 23"><rect x="0.5" y="0.5" width="27" height="21" fill="#5c9bd9" stroke="#0c1d96" stroke-width="1.2"/><path d="M3.5 7 L11.5 11 L3.5 15" fill="none" stroke="#fff" stroke-width="2.6"/><rect x="15" y="15" width="8" height="2.2" fill="#fff"/></svg>
<div class="t" style="position:absolute;left:114px;top:1538.14px;font-size:27px;color:#bbbbbb;font-weight:normal;font-style:normal;font-family:'Liberation Sans', sans-serif;letter-spacing:0.7px">build.sh</div>
<svg style="position:absolute;left:82px;top:1576px" width="21" height="29" viewBox="0 0 21 29"><path d="M0 8 L8 0 V8 Z" fill="#87939a"/><path d="M9 0 H20 V28 H0 V9 H9 Z" fill="#87939a"/></svg>
<svg style="position:absolute;left:86px;top:1588px" width="13" height="14" viewBox="0 0 13 14"><rect x="0" y="0" width="12" height="2" fill="#3c3f41"/><rect x="0" y="4.5" width="12" height="2" fill="#3c3f41"/><rect x="0" y="9" width="8" height="2" fill="#3c3f41"/></svg>
<div class="t" style="position:absolute;left:114px;top:1576.14px;font-size:27px;color:#bbbbbb;font-weight:normal;font-style:normal;font-family:'Liberation Sans', sans-serif;letter-spacing:0.7px">ChangeLog</div>
</div>
<svg style="left:20px;top:18px" width="29" height="23" viewBox="0 0 29 23"><path d="M0 0 H10 L13.5 4 H28 V22 H0 Z" fill="#87939a"/></svg>
<svg style="left:30px;top:25px" width="22" height="22" viewBox="0 0 22 22"><g transform="translate(0.88 0.88) scale(0.2024)"><path d="M49.5 0 C24 0 25.6 11 25.6 11 L25.6 22.5 L50 22.5 L50 26 L16 26 C16 26 0 24 0 50 C0 76 14 75 14 75 L22.5 75 L22.5 63 C22.5 63 21.8 49 36 49 L60 49 C60 49 73.5 49.2 73.5 36 L73.5 13.5 C73.5 13.5 75.5 0 49.5 0 Z" fill="#3c3f41" stroke="#3c3f41" stroke-width="9" stroke-linejoin="round"/><path d="M49.5 0 C24 0 25.6 11 25.6 11 L25.6 22.5 L50 22.5 L50 26 L16 26 C16 26 0 24 0 50 C0 76 14 75 14 75 L22.5 75 L22.5 63 C22.5 63 21.8 49 36 49 L60 49 C60 49 73.5 49.2 73.5 36 L73.5 13.5 C73.5 13.5 75.5 0 49.5 0 Z" transform="rotate(180 50 50)" fill="#3c3f41" stroke="#3c3f41" stroke-width="9" stroke-linejoin="round"/><path d="M49.5 0 C24 0 25.6 11 25.6 11 L25.6 22.5 L50 22.5 L50 26 L16 26 C16 26 0 24 0 50 C0 76 14 75 14 75 L22.5 75 L22.5 63 C22.5 63 21.8 49 36 49 L60 49 C60 49 73.5 49.2 73.5 36 L73.5 13.5 C73.5 13.5 75.5 0 49.5 0 Z" fill="#3f8cbf"/><path d="M49.5 0 C24 0 25.6 11 25.6 11 L25.6 22.5 L50 22.5 L50 26 L16 26 C16 26 0 24 0 50 C0 76 14 75 14 75 L22.5 75 L22.5 63 C22.5 63 21.8 49 36 49 L60 49 C60 49 73.5 49.2 73.5 36 L73.5 13.5 C73.5 13.5 75.5 0 49.5 0 Z" transform="rotate(180 50 50)" fill="#e2b53a"/><circle cx="36" cy="10" r="4.5" fill="#3c3f41"/><circle cx="64" cy="90" r="4.5" fill="#3c3f41"/></g></svg>
<div class="t" style="left:56.4px;top:14.83px;font-size:25px;color:#bbbbbb;font-weight:bold;font-style:normal;font-family:'Liberation Sans', sans-serif;letter-spacing:0.159px;">cloudinit</div>
<svg style="left:164px;top:6px" width="16" height="44" viewBox="0 0 16 44"><path d="M2 1 L13 22 L2 43" fill="none" stroke="#2a2c2d" stroke-width="2.2"/><path d="M1 1 L12 22 L1 43" fill="none" stroke="#55585a" stroke-width="1"/></svg>
<svg style="left:190px;top:16px" width="29" height="23" viewBox="0 0 29 23"><path d="M0 0 H10 L13.5 4 H28 V22 H0 Z" fill="#87939a"/></svg>
<div class="t" style="left:226.0px;top:14.83px;font-size:25px;color:#bbbbbb;font-weight:normal;font-style:normal;font-family:'Liberation Sans', sans-serif;letter-spacing:0.312px;">tools</div>
<svg style="left:277px;top:6px" width="16" height="44" viewBox="0 0 16 44"><path d="M2 1 L13 22 L2 43" fill="none" stroke="#2a2c2d" stroke-width="2.2"/><path d="M1 1 L12 22 L1 43" fill="none" stroke="#55585a" stroke-width="1"/></svg>
<svg style="left:311px;top:11px" width="23" height="30" viewBox="0 0 23 30"><path d="M0 8 L8 0 V8 Z" fill="#87939a"/><path d="M9 0 H22 V29 H0 V9 H9 Z" fill="#87939a"/></svg>
<svg style="left:317px;top:22px" width="23" height="23" viewBox="0 0 23 23"><g transform="translate(0.92 0.92) scale(0.2116)"><path d="M49.5 0 C24 0 25.6 11 25.6 11 L25.6 22.5 L50 22.5 L50 26 L16 26 C16 26 0 24 0 50 C0 76 14 75 14 75 L22.5 75 L22.5 63 C22.5 63 21.8 49 36 49 L60 49 C60 49 73.5 49.2 73.5 36 L73.5 13.5 C73.5 13.5 75.5 0 49.5 0 Z" fill="#3c3f41" stroke="#3c3f41" stroke-width="9" stroke-linejoin="round"/><path d="M49.5 0 C24 0 25.6 11 25.6 11 L25.6 22.5 L50 22.5 L50 26 L16 26 C16 26 0 24 0 50 C0 76 14 75 14 75 L22.5 75 L22.5 63 C22.5 63 21.8 49 36 49 L60 49 C60 49 73.5 49.2 73.5 36 L73.5 13.5 C73.5 13.5 75.5 0 49.5 0 Z" transform="rotate(180 50 50)" fill="#3c3f41" stroke="#3c3f41" stroke-width="9" stroke-linejoin="round"/><path d="M49.5 0 C24 0 25.6 11 25.6 11 L25.6 22.5 L50 22.5 L50 26 L16 26 C16 26 0 24 0 50 C0 76 14 75 14 75 L22.5 75 L22.5 63 C22.5 63 21.8 49 36 49 L60 49 C60 49 73.5 49.2 73.5 36 L73.5 13.5 C73.5 13.5 75.5 0 49.5 0 Z" fill="#3f8cbf"/><path d="M49.5 0 C24 0 25.6 11 25.6 11 L25.6 22.5 L50 22.5 L50 26 L16 26 C16 26 0 24 0 50 C0 76 14 75 14 75 L22.5 75 L22.5 63 C22.5 63 21.8 49 36 49 L60 49 C60 49 73.5 49.2 73.5 36 L73.5 13.5 C73.5 13.5 75.5 0 49.5 0 Z" transform="rotate(180 50 50)" fill="#e2b53a"/><circle cx="36" cy="10" r="4.5" fill="#3c3f41"/><circle cx="64" cy="90" r="4.5" fill="#3c3f41"/></g></svg>
<div class="t" style="left:344.6px;top:14.83px;font-size:25px;color:#bbbbbb;font-weight:normal;font-style:normal;font-family:'Liberation Sans', sans-serif;letter-spacing:0.808px;">ccfg-merge-debug</div>
<svg style="left:562px;top:6px" width="16" height="44" viewBox="0 0 16 44"><path d="M2 1 L13 22 L2 43" fill="none" stroke="#2a2c2d" stroke-width="2.2"/><path d="M1 1 L12 22 L1 43" fill="none" stroke="#55585a" stroke-width="1"/></svg>
<svg style="left:1374px;top:12px" width="34" height="32" viewBox="0 0 34 32"><path d="M2 13 L13 2 L20 2 L20 3.5 L14.7 8.6 L32 25.3 L27.6 30.1 L10.4 12.4 L6.6 17.2 Z" fill="#499c54"/></svg>
<div style="left:1430px;top:6px;width:674px;height:44px;border:2px solid #616364;border-radius:7px;box-sizing:border-box"></div>
<svg style="left:1448px;top:13px" width="30" height="30" viewBox="0 0 30 30"><rect x="2" y="1" width="20" height="28" rx="9" fill="#587585"/><circle cx="3" cy="5" r="2" fill="#587585"/><circle cx="21" cy="5" r="2" fill="#587585"/><circle cx="8.5" cy="9" r="3.6" fill="#9aa3a8"/><circle cx="15.5" cy="9" r="3.6" fill="#9aa3a8"/><circle cx="8.5" cy="9.5" r="1.8" fill="#1e1e1e"/><circle cx="15.5" cy="9.5" r="1.8" fill="#1e1e1e"/><circle cx="12" cy="13" r="1.3" fill="#1e1e1e"/><circle cx="2" cy="17" r="1.8" fill="#8a6e5e"/><circle cx="5" cy="27.5" r="1.8" fill="#8a6e5e"/><circle cx="19" cy="27.5" r="1.8" fill="#8a6e5e"/><path d="M13 21 L20 15 V26 Z" fill="#8a6e5e"/><path d="M21.5 15.5 L28 20.5 L21.5 25.5 Z" fill="#3f7a3f"/></svg>
<div class="t" style="left:1484.8px;top:16.28px;font-size:24px;color:#bbbbbb;font-weight:normal;font-style:normal;font-family:'Liberation Sans', sans-serif;letter-spacing:-0.139px;">TestReverse in gitlab.alibaba-inc.com/cool.go/stringutil</div>
<svg style="left:2070px;top:22px" width="20" height="13" viewBox="0 0 20 13"><path d="M0 0 H19 L9.5 12 Z" fill="#b9b9b9"/></svg>
<svg style="left:2130px;top:16px" width="22" height="25" viewBox="0 0 22 25"><path d="M0 0 L21 12 L0 24 Z" fill="#499c54"/></svg>
<svg style="left:2180px;top:13px" width="25" height="30" viewBox="0 0 25 30"><g fill="#499c54"><path d="M5 2.5 L12 8 L19 2.5" fill="none" stroke="#499c54" stroke-width="3.4"/><ellipse cx="12" cy="18" rx="7.8" ry="11"/><rect x="0" y="9.3" width="24" height="3"/><rect x="0" y="15.6" width="24" height="3"/><rect x="0" y="22.3" width="24" height="3"/></g><rect x="8.6" y="13" width="7" height="2.7" fill="#3c3f41"/><rect x="8.6" y="19" width="7" height="2.7" fill="#3c3f41"/></svg>
<svg style="left:2229px;top:15px" width="32" height="31" viewBox="0 0 32 31"><path d="M1 3 Q8 0 13 0 Q17 0 20 2 V8 H15.5 V4.6 H11 V24 L15.5 20.5 V25 Q13 26.5 10 25 Q1 20 1 12 Z" fill="#bfc0c2"/><path d="M16.5 11 L30.5 19.5 L16.5 28.5 Z" fill="#499c54"/></svg>
<svg style="left:2281px;top:14px" width="32" height="32" viewBox="0 0 32 32"><path d="M24 10 A11 11 0 1 0 12 23.5" fill="none" stroke="#5a5c5e" stroke-width="2.6"/><path d="M13.5 7 V12.5 L9 17" fill="none" stroke="#5a5c5e" stroke-width="2.4"/><path d="M17 12.5 L30 20.5 L17 29.5 Z" fill="#5a5c5e"/></svg>
<svg style="left:2334px;top:17px" width="32" height="28" viewBox="0 0 32 28"><g fill="#5a5c5e"><rect x="0" y="0" width="22" height="3"/><rect x="0" y="8" width="16" height="3"/><rect x="0" y="16" width="10" height="3"/><rect x="0" y="24" width="10" height="3"/><path d="M14 12 L30 20 L14 28 Z"/></g></svg>
<svg style="left:2390px;top:18px" width="21" height="21" viewBox="0 0 21 21"><rect width="20" height="20" fill="#5a5c5e"/></svg>
<svg style="left:2436px;top:13px" width="31" height="30" viewBox="0 0 31 30"><g fill="#5a5c5e"><path d="M12 7 L22 17 L16 23 Q10 25 8 21 L6 19 Q4 15 6 13 Z"/><rect x="16" y="2" width="3" height="10" transform="rotate(45 17 7)"/><rect x="23" y="9" width="3" height="10" transform="rotate(45 24 14)"/><rect x="0" y="23" width="3" height="9" transform="rotate(45 2 27)"/></g></svg>
<div style="left:2484px;top:8px;width:2px;height:40px;background:#515355;"></div>
<div class="t" style="left:2504.5px;top:16.68px;font-size:24px;color:#bbbbbb;font-weight:normal;font-style:normal;font-family:'Liberation Sans', sans-serif;letter-spacing:-0.625px;">Git:</div>
<svg style="left:2564px;top:15px" width="26" height="26" viewBox="0 0 26 26"><path d="M23 3 L8 18" stroke="#3592c4" stroke-width="4" fill="none"/><path d="M2 9 V24 H17" stroke="#3592c4" stroke-width="4" fill="none"/></svg>
<svg style="left:2614px;top:15px" width="31" height="25" viewBox="0 0 31 25"><path d="M2 12 L10 20 L28 2" stroke="#499c54" stroke-width="4.5" fill="none"/></svg>
<svg style="left:2664px;top:13px" width="32" height="32" viewBox="0 0 32 32"><circle cx="15" cy="15" r="12" fill="none" stroke="#b4b4b4" stroke-width="3.2"/><path d="M15 7 V15 L20 19" fill="none" stroke="#b4b4b4" stroke-width="3"/></svg>
<svg style="left:2719px;top:13px" width="30" height="30" viewBox="0 0 30 30"><path d="M6 9 H18 Q26 9 26 17 Q26 25 18 25 H8" fill="none" stroke="#b4b4b4" stroke-width="3.2"/><path d="M1 9 L9 2 V16 Z" fill="#b4b4b4"/></svg>
<div style="left:2764px;top:8px;width:2px;height:40px;background:#515355;"></div>
<svg style="left:2782px;top:17px" width="32" height="27" viewBox="0 0 32 27"><path d="M0 0 H11 L14 4 H27 V22 H0 Z" fill="#c8c8c8"/><rect x="13" y="12" width="18" height="14" fill="#3c3f41"/><g fill="#3e9bd3"><rect x="15" y="14" width="6" height="5"/><rect x="23" y="14" width="6" height="5"/><rect x="15" y="21" width="6" height="5"/><rect x="23" y="21" width="6" height="5"/></g></svg>
<svg style="left:2834px;top:13px" width="32" height="32" viewBox="0 0 32 32"><circle cx="12" cy="12" r="9" fill="none" stroke="#b4b4b4" stroke-width="3.5"/><path d="M18.5 18.5 L28 28" stroke="#b4b4b4" stroke-width="4.5"/></svg>
<svg style="left:61px;top:70px" width="29" height="27" viewBox="0 0 29 27"><rect x="1" y="1" width="26" height="24" fill="none" stroke="#87939a" stroke-width="2"/><rect x="1" y="1" width="26" height="6" fill="#87939a"/><rect x="4" y="9" width="20" height="14" fill="#4589a3"/></svg>
<div class="t" style="left:100.0px;top:69.99px;font-size:26px;color:#bbbbbb;font-weight:normal;font-style:normal;font-family:'Liberation Sans', sans-serif;letter-spacing:0.188px;">Project</div>
<svg style="left:200px;top:78px" width="16" height="11" viewBox="0 0 16 11"><path d="M0 0 H15 L7.5 10 Z" fill="#b4b4b4"/></svg>
<svg style="left:696px;top:69px" width="25" height="26" viewBox="0 0 25 26"><g fill="#bcbcbd"><path d="M5 0.8 H18.6 L11.8 7.8 Z"/><rect x="0" y="10.8" width="24" height="4.3"/><path d="M5 25 H18.6 L11.8 18.2 Z"/></g></svg>
<div style="left:740px;top:62px;width:2px;height:40px;background:#4f5153;"></div>
<svg style="left:760px;top:68px" width="28" height="28" viewBox="0 0 28 28"><g transform="translate(14 14)"><rect x="-2.9" y="-13.3" width="5.8" height="7" rx="0.8" transform="rotate(0)" fill="#bcbcbd"/><rect x="-2.9" y="-13.3" width="5.8" height="7" rx="0.8" transform="rotate(60)" fill="#bcbcbd"/><rect x="-2.9" y="-13.3" width="5.8" height="7" rx="0.8" transform="rotate(120)" fill="#bcbcbd"/><rect x="-2.9" y="-13.3" width="5.8" height="7" rx="0.8" transform="rotate(180)" fill="#bcbcbd"/><rect x="-2.9" y="-13.3" width="5.8" height="7" rx="0.8" transform="rotate(240)" fill="#bcbcbd"/><rect x="-2.9" y="-13.3" width="5.8" height="7" rx="0.8" transform="rotate(300)" fill="#bcbcbd"/><circle r="10" fill="#bcbcbd"/><circle r="4.4" fill="#3c3f41"/></g></svg>
<div style="left:814px;top:80px;width:24px;height:4.3px;background:#bcbcbd;"></div>
<div style="left:856px;top:58px;width:296px;height:47px;background:#4e5254;"></div>
<div style="left:856px;top:100px;width:296px;height:6px;background:#4a9cbf;"></div>
<svg style="left:876px;top:66px" width="23" height="30" viewBox="0 0 23 30"><path d="M0 8 L8 0 V8 Z" fill="#87939a"/><path d="M9 0 H22 V29 H0 V9 H9 Z" fill="#87939a"/></svg>
<svg style="left:882px;top:77px" width="23" height="23" viewBox="0 0 23 23"><g transform="translate(0.92 0.92) scale(0.2116)"><path d="M49.5 0 C24 0 25.6 11 25.6 11 L25.6 22.5 L50 22.5 L50 26 L16 26 C16 26 0 24 0 50 C0 76 14 75 14 75 L22.5 75 L22.5 63 C22.5 63 21.8 49 36 49 L60 49 C60 49 73.5 49.2 73.5 36 L73.5 13.5 C73.5 13.5 75.5 0 49.5 0 Z" fill="#4e5254" stroke="#4e5254" stroke-width="9" stroke-linejoin="round"/><path d="M49.5 0 C24 0 25.6 11 25.6 11 L25.6 22.5 L50 22.5 L50 26 L16 26 C16 26 0 24 0 50 C0 76 14 75 14 75 L22.5 75 L22.5 63 C22.5 63 21.8 49 36 49 L60 49 C60 49 73.5 49.2 73.5 36 L73.5 13.5 C73.5 13.5 75.5 0 49.5 0 Z" transform="rotate(180 50 50)" fill="#4e5254" stroke="#4e5254" stroke-width="9" stroke-linejoin="round"/><path d="M49.5 0 C24 0 25.6 11 25.6 11 L25.6 22.5 L50 22.5 L50 26 L16 26 C16 26 0 24 0 50 C0 76 14 75 14 75 L22.5 75 L22.5 63 C22.5 63 21.8 49 36 49 L60 49 C60 49 73.5 49.2 73.5 36 L73.5 13.5 C73.5 13.5 75.5 0 49.5 0 Z" fill="#3f8cbf"/><path d="M49.5 0 C24 0 25.6 11 25.6 11 L25.6 22.5 L50 22.5 L50 26 L16 26 C16 26 0 24 0 50 C0 76 14 75 14 75 L22.5 75 L22.5 63 C22.5 63 21.8 49 36 49 L60 49 C60 49 73.5 49.2 73.5 36 L73.5 13.5 C73.5 13.5 75.5 0 49.5 0 Z" transform="rotate(180 50 50)" fill="#e2b53a"/><circle cx="36" cy="10" r="4.5" fill="#4e5254"/><circle cx="64" cy="90" r="4.5" fill="#4e5254"/></g></svg>
<div class="t" style="left:910.0px;top:71.48px;font-size:24px;color:#bbbbbb;font-weight:normal;font-style:normal;font-family:'Liberation Sans', sans-serif;letter-spacing:0.130px;">ccfg-merge-debug</div>
<svg style="left:1121px;top:76px" width="16" height="16" viewBox="0 0 16 16"><path d="M1 1 L15 15 M15 1 L1 15" stroke="#77878a" stroke-width="2"/></svg>
<svg style="left:957px;top:183px" width="20" height="24" viewBox="0 0 20 24"><path d="M1 1 H19 V13 L10 22 L1 13 Z" fill="#06303a" stroke="#80959b" stroke-width="1.5"/><rect x="5" y="8" width="10" height="2" fill="#80959b"/></svg>
<svg style="left:957px;top:520px" width="20" height="24" viewBox="0 0 20 24"><path d="M1 23 H19 V11 L10 2 L1 11 Z" fill="#06303a" stroke="#80959b" stroke-width="1.5"/><rect x="5" y="14" width="10" height="2" fill="#80959b"/></svg>
<svg style="left:957px;top:625px" width="20" height="24" viewBox="0 0 20 24"><path d="M1 1 H19 V13 L10 22 L1 13 Z" fill="#06303a" stroke="#80959b" stroke-width="1.5"/><rect x="5" y="8" width="10" height="2" fill="#80959b"/></svg>
<svg style="left:957px;top:965px" width="20" height="24" viewBox="0 0 20 24"><path d="M1 1 H19 V13 L10 22 L1 13 Z" fill="#06303a" stroke="#80959b" stroke-width="1.5"/><rect x="5" y="8" width="10" height="2" fill="#80959b"/></svg>
<svg style="left:957px;top:999px" width="20" height="24" viewBox="0 0 20 24"><path d="M1 1 H19 V13 L10 22 L1 13 Z" fill="#06303a" stroke="#80959b" stroke-width="1.5"/><rect x="5" y="8" width="10" height="2" fill="#80959b"/></svg>
<svg style="left:957px;top:1030px" width="20" height="24" viewBox="0 0 20 24"><path d="M1 23 H19 V11 L10 2 L1 11 Z" fill="#06303a" stroke="#80959b" stroke-width="1.5"/><rect x="5" y="14" width="10" height="2" fill="#80959b"/></svg>
<svg style="left:957px;top:1064px" width="20" height="24" viewBox="0 0 20 24"><path d="M1 23 H19 V11 L10 2 L1 11 Z" fill="#06303a" stroke="#80959b" stroke-width="1.5"/><rect x="5" y="14" width="10" height="2" fill="#80959b"/></svg>
<svg style="left:1108px;top:779px" width="64" height="4" viewBox="0 0 64 4"><rect x="0" y="0" width="2.5" height="2.5" fill="#c9a33b"/><rect x="6" y="0" width="2.5" height="2.5" fill="#c9a33b"/><rect x="12" y="0" width="2.5" height="2.5" fill="#c9a33b"/><rect x="18" y="0" width="2.5" height="2.5" fill="#c9a33b"/><rect x="24" y="0" width="2.5" height="2.5" fill="#c9a33b"/><rect x="30" y="0" width="2.5" height="2.5" fill="#c9a33b"/><rect x="36" y="0" width="2.5" height="2.5" fill="#c9a33b"/><rect x="42" y="0" width="2.5" height="2.5" fill="#c9a33b"/><rect x="48" y="0" width="2.5" height="2.5" fill="#c9a33b"/><rect x="54" y="0" width="2.5" height="2.5" fill="#c9a33b"/><rect x="60" y="0" width="2.5" height="2.5" fill="#c9a33b"/></svg>
<svg style="left:1076px;top:1629px" width="56" height="4" viewBox="0 0 56 4"><rect x="0" y="0" width="2.5" height="2.5" fill="#c9a33b"/><rect x="6" y="0" width="2.5" height="2.5" fill="#c9a33b"/><rect x="12" y="0" width="2.5" height="2.5" fill="#c9a33b"/><rect x="18" y="0" width="2.5" height="2.5" fill="#c9a33b"/><rect x="24" y="0" width="2.5" height="2.5" fill="#c9a33b"/><rect x="30" y="0" width="2.5" height="2.5" fill="#c9a33b"/><rect x="36" y="0" width="2.5" height="2.5" fill="#c9a33b"/><rect x="42" y="0" width="2.5" height="2.5" fill="#c9a33b"/><rect x="48" y="0" width="2.5" height="2.5" fill="#c9a33b"/><rect x="54" y="0" width="2.5" height="2.5" fill="#c9a33b"/></svg>
<svg style="left:1044px;top:1289px" width="82" height="7" viewBox="0 0 82 7"><path d="M0.8 5 L4 1 L8 5 L12 1 L16 5 L20 1 L24 5 L28 1 L32 5 L36 1 L40 5 L44 1 L48 5 L52 1 L56 5 L60 1 L64 5 L68 1 L72 5 L76 1 L80 5" fill="none" stroke="#93a52a" stroke-width="1.7"/></svg>
<svg style="left:1604px;top:1323px" width="66" height="7" viewBox="0 0 66 7"><path d="M0.8 5 L4 1 L8 5 L12 1 L16 5 L20 1 L24 5 L28 1 L32 5 L36 1 L40 5 L44 1 L48 5 L52 1 L56 5 L60 1 L64 5" fill="none" stroke="#93a52a" stroke-width="1.7"/></svg>
<svg style="left:1044px;top:1561px" width="98" height="7" viewBox="0 0 98 7"><path d="M0.8 5 L4 1 L8 5 L12 1 L16 5 L20 1 L24 5 L28 1 L32 5 L36 1 L40 5 L44 1 L48 5 L52 1 L56 5 L60 1 L64 5 L68 1 L72 5 L76 1 L80 5 L84 1 L88 5 L92 1 L96 5" fill="none" stroke="#93a52a" stroke-width="1.7"/></svg>
<div style="left:2814px;top:110px;width:20px;height:20px;background:#b28a2e;"></div>
<div style="left:2817px;top:142px;width:15px;height:733px;background:#4b5a60;border-radius:8px"></div>
<div style="left:2810px;top:445px;width:28px;height:4px;background:#a8852e;"></div>
<div style="left:2810px;top:848px;width:28px;height:4px;background:#a8852e;"></div>
<div style="left:2810px;top:944px;width:28px;height:4px;background:#a8852e;"></div>
<div style="left:2810px;top:1511px;width:28px;height:4px;background:#a8852e;"></div>
<div class="t" style="left:2869.97px;top:112.00px;font-size:23px;color:#bbbbbb;transform-origin:0 0;transform:rotate(90deg);letter-spacing:-0.375px">Ant Build</div>
<div class="t" style="left:2869.97px;top:282.00px;font-size:23px;color:#bbbbbb;transform-origin:0 0;transform:rotate(90deg);letter-spacing:-0.208px">Maven Projects</div>
<div class="t" style="left:2869.97px;top:521.00px;font-size:23px;color:#bbbbbb;transform-origin:0 0;transform:rotate(90deg);letter-spacing:-0.300px">Database</div>
<div class="t" style="left:2869.97px;top:691.50px;font-size:23px;color:#bbbbbb;transform-origin:0 0;transform:rotate(90deg);letter-spacing:-0.333px">SciView</div>
<div class="t" style="left:2869.97px;top:852.90px;font-size:23px;color:#bbbbbb;transform-origin:0 0;transform:rotate(90deg);letter-spacing:-0.305px">Bean Validation</div>
<svg style="left:2848px;top:78px" width="24" height="24" viewBox="0 0 24 24"><g fill="#b4b4b4"><ellipse cx="12" cy="6" rx="4" ry="4"/><ellipse cx="12" cy="16" rx="5" ry="6"/><path d="M2 4 L8 9 M22 4 L16 9 M1 14 H7 M23 14 H17 M2 23 L8 18 M22 23 L16 18" stroke="#b4b4b4" stroke-width="2"/></g></svg>
<div class="t" style="left:2846px;top:245px;font-size:30px;color:#b4b4b4;font-weight:bold;font-style:italic">m</div>
<svg style="left:2848px;top:486px" width="23" height="26" viewBox="0 0 23 26"><path d="M0.5 4 A11 3.8 0 0 1 22.5 4 V20.5 A11 3.8 0 0 1 0.5 20.5 Z" fill="#b9b9b9"/><g fill="none" stroke="#3c3f41" stroke-width="1.3"><path d="M0.5 5 A11 3.8 0 0 0 22.5 5"/><path d="M0.5 10.5 A11 3.8 0 0 0 22.5 10.5"/><path d="M0.5 16 A11 3.8 0 0 0 22.5 16"/></g></svg>
<svg style="left:2848px;top:662px" width="23" height="19" viewBox="0 0 23 19"><g fill="#b9b9b9"><rect x="0" y="0" width="4" height="4.5"/><rect x="6" y="0" width="10" height="4.5"/><rect x="18" y="0" width="4" height="4.5"/><rect x="0" y="6.5" width="4" height="5"/><rect x="6" y="6.5" width="10" height="5"/><rect x="18" y="6.5" width="4" height="5"/><rect x="0" y="13.5" width="4" height="4.5"/><rect x="6" y="13.5" width="10" height="4.5"/><rect x="18" y="13.5" width="4" height="4.5"/></g></svg>
<svg style="left:2850px;top:819px" width="24" height="24" viewBox="0 0 24 24"><path d="M2 10 L12 2 L22 10 L12 18 Z" fill="#d9922e"/><path d="M5 14 L11 20 L22 8" fill="none" stroke="#49a84a" stroke-width="3.5"/></svg>
<div class="t" style="left:9.13px;top:169.00px;font-size:23px;color:#f0f0f0;transform-origin:0 0;transform:rotate(-90deg);letter-spacing:-0.414px"><u style="text-decoration-thickness:2px;text-underline-offset:3px">1</u>: Project</div>
<svg style="left:10px;top:182px" width="22" height="19" viewBox="0 0 22 19"><path d="M0 0 H8 L11 4 H21 V18 H0 Z" fill="#b9b9b9"/></svg>
<div class="t" style="left:10.53px;top:1341.00px;font-size:23px;color:#bbbbbb;transform-origin:0 0;transform:rotate(-90deg);letter-spacing:0.011px"><u style="text-decoration-thickness:2px;text-underline-offset:3px">7</u>: Structure</div>
<svg style="left:12px;top:1353px" width="18" height="19" viewBox="0 0 18 19"><g fill="#b4b4b4"><rect x="0" y="11" width="7" height="7"/><rect x="10" y="0" width="7" height="7"/><rect x="10" y="11" width="7" height="7"/></g></svg>
<div class="t" style="left:10.53px;top:1538.70px;font-size:23px;color:#bbbbbb;transform-origin:0 0;transform:rotate(-90deg);letter-spacing:0.170px"><u style="text-decoration-thickness:2px;text-underline-offset:3px">2</u>: Favorites</div>
<svg style="left:8px;top:1545px" width="26" height="26" viewBox="0 0 26 26"><path d="M13 0 L16 9.5 H26 L18 15.5 L21 25 L13 19 L5 25 L8 15.5 L0 9.5 H10 Z" fill="#b4b4b4"/></svg>
<div class="t" style="left:10.53px;top:1660.80px;font-size:23px;color:#bbbbbb;transform-origin:0 0;transform:rotate(-90deg);letter-spacing:-0.038px">Web</div>
<svg style="left:9px;top:1671px" width="24" height="24" viewBox="0 0 24 24"><circle cx="12" cy="12" r="10.5" fill="none" stroke="#b4b4b4" stroke-width="3"/><path d="M5 6 L10 9 L8 14 L12 18 L10 22 M15 3 L14 8 L19 11 L21 16" fill="none" stroke="#b4b4b4" stroke-width="3"/></svg>
<svg style="left:62px;top:1729px" width="21" height="18" viewBox="0 0 21 18"><g fill="#b4b4b4"><rect x="0" y="0" width="3.5" height="3.5"/><rect x="6" y="0" width="14" height="3.5"/><rect x="0" y="7" width="3.5" height="3.5"/><rect x="6" y="7" width="14" height="3.5"/><rect x="0" y="14" width="3.5" height="3.5"/><rect x="6" y="14" width="14" height="3.5"/></g></svg>
<div class="t" style="left:91.7px;top:1727.03px;font-size:23px;color:#bbbbbb;font-weight:normal;font-style:normal;font-family:'Liberation Sans', sans-serif;letter-spacing:-0.521px;">6: TODO</div>
<div style="left:92px;top:1749px;width:13px;height:2px;background:#bbbbbb;"></div>
<svg style="left:224px;top:1727px" width="23" height="20" viewBox="0 0 23 20"><rect width="22" height="19" fill="#b4b4b4"/><path d="M4 5 L9 9 L4 13" fill="none" stroke="#3c3f41" stroke-width="2.2"/><rect x="10" y="13" width="8" height="2.2" fill="#3c3f41"/></svg>
<div class="t" style="left:256.0px;top:1727.03px;font-size:23px;color:#bbbbbb;font-weight:normal;font-style:normal;font-family:'Liberation Sans', sans-serif;letter-spacing:0.161px;">Terminal</div>
<svg style="left:395px;top:1726px" width="22" height="24" viewBox="0 0 22 24"><g fill="#b4b4b4"><rect x="0" y="4" width="3" height="20"/><rect x="0" y="14" width="12" height="3"/><rect x="10" y="6" width="3" height="11"/><path d="M6 7 L11.5 0 L17 7 Z"/><rect x="14" y="9" width="8" height="3"/></g></svg>
<div class="t" style="left:425.6px;top:1727.03px;font-size:23px;color:#bbbbbb;font-weight:normal;font-style:normal;font-family:'Liberation Sans', sans-serif;letter-spacing:-0.110px;">9: Version Control</div>
<div style="left:426px;top:1749px;width:13px;height:2px;background:#bbbbbb;"></div>
<svg style="left:654px;top:1727px" width="26" height="21" viewBox="0 0 26 21"><path d="M25 0 Q24 16 10 19 Q3 20 1 17 Q4 4 25 0 Z" fill="#b4b4b4"/><path d="M3 19 Q10 10 20 5" fill="none" stroke="#3c3f41" stroke-width="1.5"/></svg>
<div class="t" style="left:688.0px;top:1727.03px;font-size:23px;color:#bbbbbb;font-weight:normal;font-style:normal;font-family:'Liberation Sans', sans-serif;letter-spacing:-0.100px;">Spring</div>
<svg style="left:799px;top:1727px" width="27" height="21" viewBox="0 0 27 21"><rect x="1" y="1" width="25" height="19" fill="none" stroke="#b4b4b4" stroke-width="2.5"/><g fill="#b4b4b4"><rect x="5" y="5" width="7" height="11"/><rect x="14" y="5" width="7" height="11"/></g><g fill="#3c3f41"><rect x="8" y="8" width="4" height="2"/><rect x="8" y="12" width="4" height="1.5"/><rect x="17" y="8" width="4" height="2"/><rect x="17" y="12" width="4" height="1.5"/></g></svg>
<div class="t" style="left:834.0px;top:1727.03px;font-size:23px;color:#bbbbbb;font-weight:normal;font-style:normal;font-family:'Liberation Sans', sans-serif;letter-spacing:0.018px;">Java Enterprise</div>
<svg style="left:1040px;top:1726px" width="22" height="23" viewBox="0 0 22 23"><ellipse cx="11" cy="20" rx="7" ry="2.5" fill="#2a2c2d"/><circle cx="11" cy="11" r="9.5" fill="#2f6fd6"/><path d="M11 11 L13 1.6 A9.5 9.5 0 0 1 15.5 19.4 Z" fill="#e8262b"/><path d="M11 11 L15.5 19.4 A9.5 9.5 0 0 1 5.5 18.8 Z" fill="#2f9a44"/></svg>
<div class="t" style="left:1072.7px;top:1727.03px;font-size:23px;color:#bbbbbb;font-weight:normal;font-style:normal;font-family:'Liberation Sans', sans-serif;letter-spacing:0.562px;">Statistic</div>
<svg style="left:2686px;top:1726px" width="27" height="27" viewBox="0 0 27 27"><path d="M13 0 A13 13 0 1 0 26 13 V26 H13" fill="#499c54"/><circle cx="13" cy="13" r="13" fill="#499c54"/><rect x="13" y="13" width="13" height="13" fill="#499c54"/></svg>
<div class="t" style="left:2696.0px;top:1728.67px;font-size:20px;color:#ffffff;font-weight:normal;font-style:normal;font-family:'Liberation Sans', sans-serif;letter-spacing:0.000px;">1</div>
<div class="t" style="left:2720.7px;top:1726.97px;font-size:22px;color:#bbbbbb;font-weight:normal;font-style:normal;font-family:'Liberation Sans', sans-serif;letter-spacing:0.109px;">Event Log</div>
<svg style="left:12px;top:1766px" width="26" height="27" viewBox="0 0 26 27"><rect x="7" y="1" width="18" height="18" fill="none" stroke="#b4b4b4" stroke-width="2"/><path d="M1 7 V25 H19" fill="none" stroke="#b4b4b4" stroke-width="2"/></svg>
<div class="t" style="left:62.0px;top:1769.17px;font-size:22px;color:#bbbbbb;font-weight:normal;font-style:normal;font-family:'Liberation Sans', sans-serif;letter-spacing:0.601px;">Frameworks Detected: Python framework is detected. // Configure (5 minutes ago)</div>
<div class="t" style="left:2388.7px;top:1768.53px;font-size:23px;color:#bbbbbb;font-weight:normal;font-style:normal;font-family:'Liberation Sans', sans-serif;letter-spacing:-0.583px;">34:1</div>
<div class="t" style="left:2454.6px;top:1768.53px;font-size:23px;color:#bbbbbb;font-weight:normal;font-style:normal;font-family:'Liberation Sans', sans-serif;letter-spacing:0.000px;">LF</div>
<svg style="left:2488px;top:1771px" width="12" height="19" viewBox="0 0 12 19"><path d="M0 7 L5.5 0 L11 7 Z M0 11 L5.5 18 L11 11 Z" fill="#a0a0a0"/></svg>
<div class="t" style="left:2520.5px;top:1768.53px;font-size:23px;color:#bbbbbb;font-weight:normal;font-style:normal;font-family:'Liberation Sans', sans-serif;letter-spacing:-0.156px;">UTF-8</div>
<svg style="left:2596px;top:1771px" width="12" height="19" viewBox="0 0 12 19"><path d="M0 7 L5.5 0 L11 7 Z M0 11 L5.5 18 L11 11 Z" fill="#a0a0a0"/></svg>
<div class="t" style="left:2634.0px;top:1768.53px;font-size:23px;color:#bbbbbb;font-weight:normal;font-style:normal;font-family:'Liberation Sans', sans-serif;letter-spacing:0.000px;">Git: master</div>
<div style="left:849px;top:41px;width:314px;height:72px;border:6px solid #f5172a;border-radius:10px;box-sizing:border-box;box-shadow:0 0 6px rgba(0,0,0,0.35), inset 0 0 6px rgba(0,0,0,0.35)"></div>
<div style="left:24px;top:301px;width:521px;height:70px;border:6px solid #f5172a;border-radius:10px;box-sizing:border-box;box-shadow:0 0 6px rgba(0,0,0,0.35), inset 0 0 6px rgba(0,0,0,0.35)"></div>
<div style="left:2733px;top:1745px;width:147px;height:55px;background:#000000;"></div>
<svg style="left:2744px;top:1753px" width="40" height="36" viewBox="0 0 40 36"><path d="M29.5 6 A15 15 0 1 0 29.5 29" fill="none" stroke="#ffffff" stroke-width="4.2"/><path d="M9.5 10 L16 10 L31 25 L24 25 Z" fill="#ffffff"/><path d="M10 25 Q18 13 35.5 5.5 Q24 13 17 25 Z" fill="#f4b312"/></svg>
<svg style="left:2785px;top:1760px" width="86" height="20" viewBox="0 0 86 20"><g transform="scale(1 0.9)"><g transform="translate(0.0 0)"><path d="M1.5 9 L6 2 L10.5 8 M3 10 H9 V14.5 M3 10 V18.5 H11 M14 4 V14 M18 1.5 V18.5 L16 17.5" fill="none" stroke="#fff" stroke-width="2.2" stroke-linecap="square"/></g><g transform="translate(21.2 0)"><path d="M5 1 V3.5 M1 4.5 H9 M3 5.5 L4 8 M7 5.5 L6 8 M1 9 H9 M5 9 V19 M1 13 H9 M5 13 L1.5 18 M5 13 L8.5 17 M18.5 2 L12.5 4 V19 M12.5 9.5 H19.5 M16 9.5 V19" fill="none" stroke="#fff" stroke-width="2.2" stroke-linecap="square"/></g><g transform="translate(42.4 0)"><path d="M1 2.5 H19 M0.5 18 H19.5 M7.5 3 L5.5 10.5 H15 L14 17.5 M6 6.5 H14 L12.5 14 H5" fill="none" stroke="#fff" stroke-width="2.2" stroke-linecap="square"/></g><g transform="translate(63.6 0)"><path d="M1 2.5 H9 M3 2.5 V16.5 M7 2.5 V19 M3 7 H7 M3 11.5 H7 M1 17.5 L9 15.5 M12 1 L13.5 4 M18 1 L16.5 4 M11 6 H19.5 M11 11 H19.5 M15.2 6 V11 L11 19 M15.2 11 L19.5 19" fill="none" stroke="#fff" stroke-width="2.2" stroke-linecap="square"/></g></g></svg>
<div class="t" style="left:2785.5px;top:1780.00px;font-size:6.5px;color:#ffffff;font-weight:normal;font-style:normal;font-family:'Liberation Sans', sans-serif;letter-spacing:0.985px;-webkit-text-stroke:0">CHUANG XIN HU LIAN</div>
<div class="t" style="left:987.0px;top:1683.18px;font-size:24px;color:#95a3a3;font-weight:normal;font-style:normal;font-family:'Liberation Sans', sans-serif;letter-spacing:0.400px;">main()</div>
</body></html>
